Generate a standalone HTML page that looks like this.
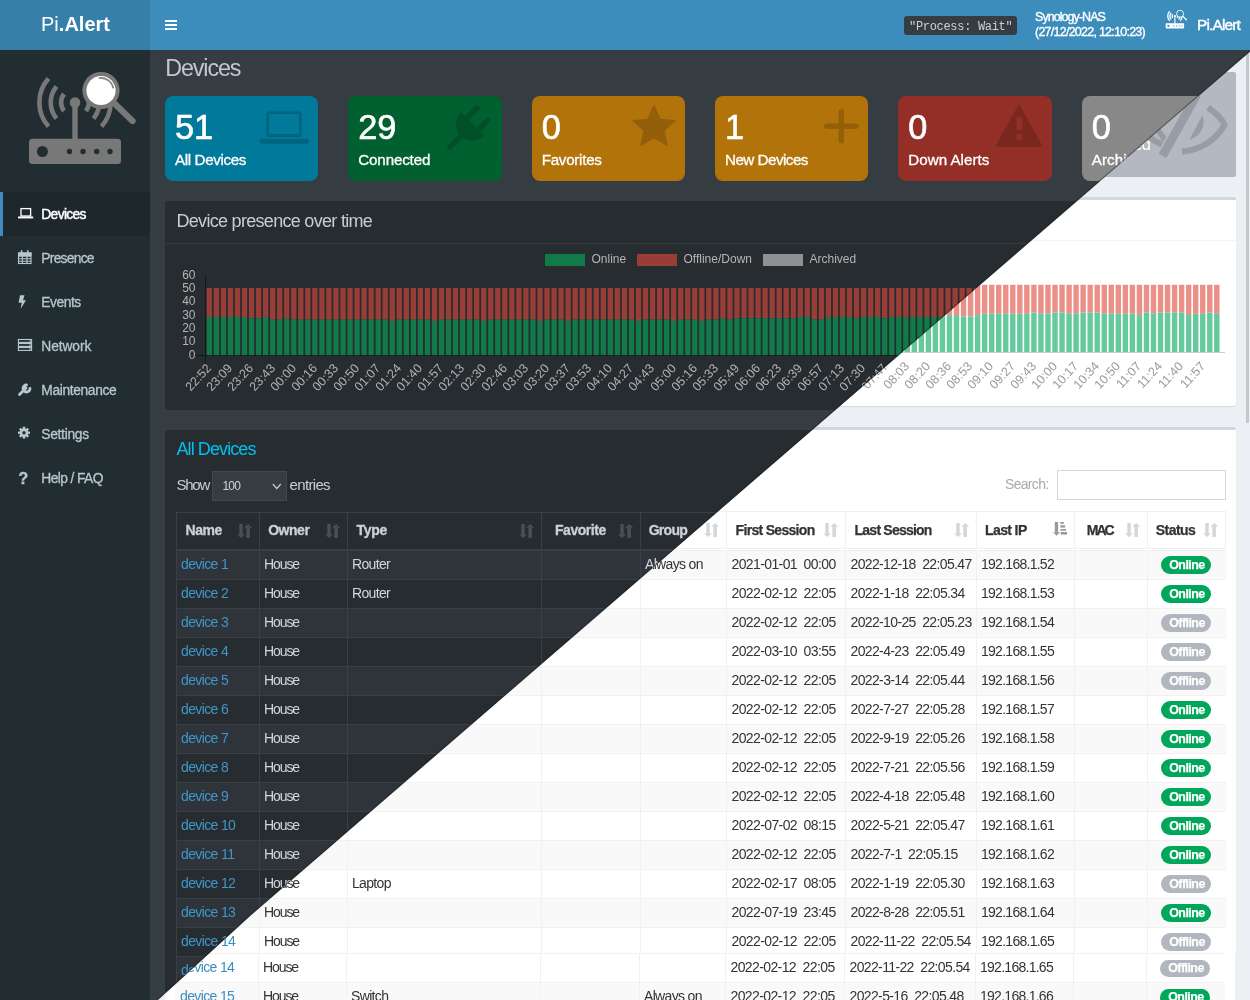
<!DOCTYPE html><html><head><meta charset="utf-8"><title>Pi.Alert Devices</title><style>
*{box-sizing:border-box;margin:0;padding:0}
html,body{width:1250px;height:1000px;overflow:hidden}
body{position:relative;font-family:"Liberation Sans",sans-serif;background:#353c42}
.layer{position:absolute;left:0;top:0;width:1250px;height:1000px;overflow:hidden;will-change:transform}
.t{position:absolute;white-space:pre}
.r{position:absolute}
svg{position:absolute;overflow:visible}
</style></head><body><div class="layer" id="dark"><div class="r" style="left:150.0px;top:50.0px;width:1100.0px;height:950.0px;background:#353c42;"></div><div class="r" style="left:0.0px;top:50.0px;width:150.0px;height:950.0px;background:#222d32;"></div><svg style="left:0;top:0" width="150" height="180" viewBox="0 0 150 180"><g fill="#787878">
<rect x="29" y="138.8" width="92" height="25.2" rx="3.5"/>
<rect x="72.3" y="102" width="5.4" height="38"/>
<circle cx="75" cy="102.6" r="5.3"/>
</g>
<g fill="#222d32"><circle cx="42.4" cy="151.5" r="5.5"/><circle cx="69.5" cy="151.5" r="2.7"/><circle cx="83" cy="151.5" r="2.7"/><circle cx="96.7" cy="151.5" r="2.7"/><circle cx="110" cy="151.5" r="2.7"/></g>
<g fill="none" stroke="#787878" stroke-width="4.6">
<path d="M48.5 78.5 A36 36 0 0 0 48.5 126.5"/>
<path d="M56.5 86.5 A25 25 0 0 0 56.5 118.5"/>
<path d="M64 94 A14 14 0 0 0 64 111"/>
<path d="M101.5 78.5 A36 36 0 0 1 101.5 126.5"/>
<path d="M93.5 86.5 A25 25 0 0 1 93.5 118.5"/>
<path d="M86 94 A14 14 0 0 1 86 111"/>
</g>
<line x1="115" y1="104" x2="132.5" y2="121" stroke="#787878" stroke-width="6.2" stroke-linecap="round"/>
<circle cx="101" cy="90.5" r="18.6" fill="#787878"/>
<circle cx="101" cy="90.5" r="14.6" fill="#fff"/>
<path d="M98.8 78.2 A12.5 12.5 0 0 1 113.3 88.3" fill="none" stroke="#8a8a8a" stroke-width="1.8"/>
</svg><div class="r" style="left:0.0px;top:192.0px;width:150.0px;height:44.0px;background:#1e282c;"></div><div class="r" style="left:0.0px;top:192.0px;width:3.0px;height:44.0px;background:#3c8dbc;"></div><div class="t" style="left:41.3px;top:207.5px;font-size:13.8px;line-height:13.8px;color:#ffffff;letter-spacing:-0.65px;-webkit-text-stroke:0.45px #fff;">Devices</div><div class="t" style="left:41.3px;top:251.5px;font-size:13.8px;line-height:13.8px;color:#b8c7ce;letter-spacing:-0.72px;-webkit-text-stroke:0.3px #b8c7ce;">Presence</div><div class="t" style="left:41.3px;top:295.5px;font-size:13.8px;line-height:13.8px;color:#b8c7ce;letter-spacing:-0.45px;-webkit-text-stroke:0.3px #b8c7ce;">Events</div><div class="t" style="left:41.3px;top:339.5px;font-size:13.8px;line-height:13.8px;color:#b8c7ce;letter-spacing:-0.09px;-webkit-text-stroke:0.3px #b8c7ce;">Network</div><div class="t" style="left:41.3px;top:383.5px;font-size:13.8px;line-height:13.8px;color:#b8c7ce;letter-spacing:-0.36px;-webkit-text-stroke:0.3px #b8c7ce;">Maintenance</div><div class="t" style="left:41.3px;top:427.5px;font-size:13.8px;line-height:13.8px;color:#b8c7ce;letter-spacing:-0.30px;-webkit-text-stroke:0.3px #b8c7ce;">Settings</div><div class="t" style="left:41.3px;top:471.5px;font-size:13.8px;line-height:13.8px;color:#b8c7ce;letter-spacing:-0.60px;-webkit-text-stroke:0.3px #b8c7ce;">Help / FAQ</div><svg style="left:0;top:180" width="40" height="320" viewBox="0 180 40 320">
<g fill="none" stroke="#fff" stroke-width="1.3"><rect x="21" y="208.6" width="9.6" height="7.4"/></g>
<rect x="18" y="216.5" width="15.2" height="1.9" fill="#fff"/>
<g fill="none" stroke="#b8c7ce" stroke-width="1.1"><rect x="18.5" y="253" width="12.5" height="10.5"/><path d="M18.5 256.3 H31 M18.5 258.8 H31 M18.5 261.2 H31 M22.4 256 V263.5 M27 256 V263.5"/></g>
<g fill="#b8c7ce"><rect x="18" y="252.5" width="13.5" height="3.5"/><rect x="20.8" y="250" width="1.6" height="3.5" rx="0.8"/><rect x="27" y="250" width="1.6" height="3.5" rx="0.8"/></g>
<path d="M20 295.3 L24.5 295.3 L23 300.3 L26 300.3 L20.5 309 L21.8 302.8 L18.6 302.8 Z" fill="#b8c7ce"/>
<g fill="none" stroke="#b8c7ce" stroke-width="1.1"><rect x="18.4" y="339.5" width="13.2" height="2.9"/><rect x="18.4" y="343.5" width="13.2" height="2.9"/><rect x="18.4" y="347.5" width="13.2" height="2.9"/></g><g fill="#b8c7ce"><circle cx="30" cy="341" r="0.8"/><circle cx="30" cy="345" r="0.8"/><circle cx="30" cy="349" r="0.8"/></g>
<path d="M19.5 394.5 L26 388 M26.5 385 a3.5 3.5 0 1 0 3.5 3.5" stroke="#b8c7ce" stroke-width="2.8" fill="none" stroke-linecap="round"/>
<circle cx="24" cy="432.7" r="4.4" fill="#b8c7ce"/>
<g stroke="#b8c7ce" stroke-width="2.3"><line x1="24" y1="426.7" x2="24" y2="438.7"/><line x1="18" y1="432.7" x2="30" y2="432.7"/><line x1="19.8" y1="428.5" x2="28.2" y2="436.9"/><line x1="28.2" y1="428.5" x2="19.8" y2="436.9"/></g>
<circle cx="24" cy="432.7" r="1.7" fill="#222d32"/>
</svg><div class="t" style="left:18.3px;top:470.0px;font-size:16.5px;line-height:16.5px;color:#b8c7ce;font-weight:bold;-webkit-text-stroke:0.3px #b8c7ce;">?</div><div class="t" style="left:165.3px;top:57.1px;font-size:23.3px;line-height:23.3px;color:#c2c7d0;letter-spacing:-1.12px;">Devices</div><div class="r" style="left:165.0px;top:96.0px;width:153.3px;height:85.0px;background:#00799a;border-radius:8px;"></div><div class="t" style="left:175.0px;top:110.0px;font-size:34.3px;line-height:34.3px;color:#ffffff;letter-spacing:-0.07px;-webkit-text-stroke:0.6px #fff;">51</div><div class="t" style="left:175.0px;top:151.9px;font-size:15.2px;line-height:15.2px;color:#ffffff;letter-spacing:-0.38px;-webkit-text-stroke:0.3px #fff;">All Devices</div><div class="r" style="left:348.3px;top:96.0px;width:153.3px;height:85.0px;background:#00602f;border-radius:8px;"></div><div class="t" style="left:358.3px;top:110.0px;font-size:34.3px;line-height:34.3px;color:#ffffff;letter-spacing:-0.07px;-webkit-text-stroke:0.6px #fff;">29</div><div class="t" style="left:358.3px;top:151.9px;font-size:15.2px;line-height:15.2px;color:#ffffff;letter-spacing:-0.17px;-webkit-text-stroke:0.3px #fff;">Connected</div><div class="r" style="left:531.7px;top:96.0px;width:153.3px;height:85.0px;background:#b3730b;border-radius:8px;"></div><div class="t" style="left:541.7px;top:110.0px;font-size:34.3px;line-height:34.3px;color:#ffffff;-webkit-text-stroke:0.6px #fff;">0</div><div class="t" style="left:541.7px;top:151.9px;font-size:15.2px;line-height:15.2px;color:#ffffff;letter-spacing:-0.28px;-webkit-text-stroke:0.3px #fff;">Favorites</div><div class="r" style="left:715.0px;top:96.0px;width:153.3px;height:85.0px;background:#b3730b;border-radius:8px;"></div><div class="t" style="left:725.0px;top:110.0px;font-size:34.3px;line-height:34.3px;color:#ffffff;-webkit-text-stroke:0.6px #fff;">1</div><div class="t" style="left:725.0px;top:151.9px;font-size:15.2px;line-height:15.2px;color:#ffffff;letter-spacing:-0.52px;-webkit-text-stroke:0.3px #fff;">New Devices</div><div class="r" style="left:898.3px;top:96.0px;width:153.3px;height:85.0px;background:#932f26;border-radius:8px;"></div><div class="t" style="left:908.3px;top:110.0px;font-size:34.3px;line-height:34.3px;color:#ffffff;-webkit-text-stroke:0.6px #fff;">0</div><div class="t" style="left:908.3px;top:151.9px;font-size:15.2px;line-height:15.2px;color:#ffffff;letter-spacing:-0.01px;-webkit-text-stroke:0.3px #fff;">Down Alerts</div><div class="r" style="left:1081.7px;top:96.0px;width:153.3px;height:85.0px;background:#888888;border-radius:8px;"></div><div class="t" style="left:1091.7px;top:110.0px;font-size:34.3px;line-height:34.3px;color:#ffffff;-webkit-text-stroke:0.6px #fff;">0</div><div class="t" style="left:1091.7px;top:151.9px;font-size:15.2px;line-height:15.2px;color:#ffffff;letter-spacing:0.11px;-webkit-text-stroke:0.3px #fff;">Archived</div><svg style="left:0;top:0" width="1250" height="200">
<g fill="#000" opacity="0.17">
<path fill-rule="evenodd" d="M269.7 111.2 h28.6 a3.5 3.5 0 0 1 3.5 3.5 v19 a3.5 3.5 0 0 1 -3.5 3.5 h-28.6 a3.5 3.5 0 0 1 -3.5 -3.5 v-19 a3.5 3.5 0 0 1 3.5 -3.5 z M269 114 v20 h30 v-20 z"/>
<path d="M259.5 138.9 h49.3 v2.8 a2 2 0 0 1 -2 2 h-45.3 a2 2 0 0 1 -2 -2 z"/>
</g>
<g fill="#000" opacity="0.17" transform="translate(473,124) rotate(45)">
<path d="M-16.5 0 A16.5 17.5 0 0 0 16.5 0 Z"/>
<rect x="-11.2" y="-16.5" width="5.5" height="18" rx="2.75"/>
<rect x="5.2" y="-16.5" width="5.5" height="18" rx="2.75"/>
<rect x="-2.75" y="10" width="5.5" height="25"/>
</g>
<g fill="#000" opacity="0.17"><polygon stroke="#000" stroke-width="1.5" stroke-linejoin="round" points="654,106 660.2,119.5 675,120.8 663.8,130.5 667,145 654,137.5 641,145 644.2,130.5 633,120.8 647.8,119.5"/></g>
<g fill="#000" opacity="0.17"><path d="M838.5 111.7 a2.75 2.75 0 0 1 5.5 0 v11.8 h11.8 a2.75 2.75 0 0 1 0 5.5 h-11.8 v11.8 a2.75 2.75 0 0 1 -5.5 0 v-11.8 h-11.8 a2.75 2.75 0 0 1 0 -5.5 h11.8 z"/></g>
<g opacity="0.17"><path fill="#000" d="M1019 104 L1042 145 a2 2 0 0 1 -2 2 h-42 a2 2 0 0 1 -2 -2 z"/></g>
<g fill="#932f26"><rect x="1016.6" y="117.5" width="5.6" height="13" rx="0.8"/><rect x="1016.6" y="134" width="5.6" height="6.5" rx="0.8"/></g>
</svg><div class="r" style="left:165.0px;top:201.0px;width:1070.0px;height:209.0px;background:#272c30;border-radius:3px;"></div><div class="r" style="left:165.0px;top:242.5px;width:1070.0px;height:1.0px;background:#353b41;"></div><div class="t" style="left:176.5px;top:211.8px;font-size:18.0px;line-height:18.0px;color:#c8cdd3;letter-spacing:-0.70px;">Device presence over time</div><div class="r" style="left:545.0px;top:254.0px;width:40.0px;height:12.0px;background:#107a48;"></div><div class="t" style="left:591.5px;top:252.8px;font-size:12.0px;line-height:12.0px;color:#b4b4b4;">Online</div><div class="r" style="left:637.0px;top:254.0px;width:40.0px;height:12.0px;background:#983e36;"></div><div class="t" style="left:683.5px;top:252.8px;font-size:12.0px;line-height:12.0px;color:#b4b4b4;">Offline/Down</div><div class="r" style="left:763.0px;top:254.0px;width:40.0px;height:12.0px;background:#8f9091;"></div><div class="t" style="left:809.5px;top:252.8px;font-size:12.0px;line-height:12.0px;color:#b4b4b4;">Archived</div><div class="r" style="left:205.0px;top:276.0px;width:1.0px;height:88.0px;background:#14171a;"></div><div class="r" style="left:195.0px;top:355.0px;width:1030.0px;height:1.0px;background:#14171a;"></div><div class="t" style="left:150px;width:45.5px;text-align:right;top:268.7px;font-size:12px;line-height:12px;color:#b4b4b4">60</div><div class="t" style="left:150px;width:45.5px;text-align:right;top:282.0px;font-size:12px;line-height:12px;color:#b4b4b4">50</div><div class="t" style="left:150px;width:45.5px;text-align:right;top:295.3px;font-size:12px;line-height:12px;color:#b4b4b4">40</div><div class="t" style="left:150px;width:45.5px;text-align:right;top:308.6px;font-size:12px;line-height:12px;color:#b4b4b4">30</div><div class="t" style="left:150px;width:45.5px;text-align:right;top:321.9px;font-size:12px;line-height:12px;color:#b4b4b4">20</div><div class="t" style="left:150px;width:45.5px;text-align:right;top:335.2px;font-size:12px;line-height:12px;color:#b4b4b4">10</div><div class="t" style="left:150px;width:45.5px;text-align:right;top:348.5px;font-size:12px;line-height:12px;color:#b4b4b4">0</div><svg style="left:0;top:0" width="1250" height="420"><g fill="#983e36"><rect x="206.70" y="287.98" width="5.3" height="29.00"/><rect x="213.73" y="287.98" width="5.3" height="29.00"/><rect x="220.77" y="287.98" width="5.3" height="29.00"/><rect x="227.80" y="287.98" width="5.3" height="29.00"/><rect x="234.84" y="287.98" width="5.3" height="29.00"/><rect x="241.88" y="287.98" width="5.3" height="29.00"/><rect x="248.91" y="287.98" width="5.3" height="30.31"/><rect x="255.94" y="287.98" width="5.3" height="30.31"/><rect x="262.98" y="287.98" width="5.3" height="29.00"/><rect x="270.01" y="287.98" width="5.3" height="31.63"/><rect x="277.05" y="287.98" width="5.3" height="31.63"/><rect x="284.08" y="287.98" width="5.3" height="30.31"/><rect x="291.12" y="287.98" width="5.3" height="31.63"/><rect x="298.15" y="287.98" width="5.3" height="31.63"/><rect x="305.19" y="287.98" width="5.3" height="31.63"/><rect x="312.23" y="287.98" width="5.3" height="31.63"/><rect x="319.26" y="287.98" width="5.3" height="31.63"/><rect x="326.29" y="287.98" width="5.3" height="31.63"/><rect x="333.33" y="287.98" width="5.3" height="31.63"/><rect x="340.37" y="287.98" width="5.3" height="31.63"/><rect x="347.40" y="287.98" width="5.3" height="31.63"/><rect x="354.44" y="287.98" width="5.3" height="31.63"/><rect x="361.47" y="287.98" width="5.3" height="31.63"/><rect x="368.50" y="287.98" width="5.3" height="31.63"/><rect x="375.54" y="287.98" width="5.3" height="31.63"/><rect x="382.57" y="287.98" width="5.3" height="31.63"/><rect x="389.61" y="287.98" width="5.3" height="32.95"/><rect x="396.64" y="287.98" width="5.3" height="31.63"/><rect x="403.68" y="287.98" width="5.3" height="31.63"/><rect x="410.72" y="287.98" width="5.3" height="31.63"/><rect x="417.75" y="287.98" width="5.3" height="31.63"/><rect x="424.78" y="287.98" width="5.3" height="31.63"/><rect x="431.82" y="287.98" width="5.3" height="32.95"/><rect x="438.86" y="287.98" width="5.3" height="31.63"/><rect x="445.89" y="287.98" width="5.3" height="31.63"/><rect x="452.92" y="287.98" width="5.3" height="31.63"/><rect x="459.96" y="287.98" width="5.3" height="31.63"/><rect x="467.00" y="287.98" width="5.3" height="31.63"/><rect x="474.03" y="287.98" width="5.3" height="31.63"/><rect x="481.06" y="287.98" width="5.3" height="32.95"/><rect x="488.10" y="287.98" width="5.3" height="31.63"/><rect x="495.13" y="287.98" width="5.3" height="31.63"/><rect x="502.17" y="287.98" width="5.3" height="31.63"/><rect x="509.20" y="287.98" width="5.3" height="31.63"/><rect x="516.24" y="287.98" width="5.3" height="31.63"/><rect x="523.27" y="287.98" width="5.3" height="31.63"/><rect x="530.31" y="287.98" width="5.3" height="31.63"/><rect x="537.35" y="287.98" width="5.3" height="32.95"/><rect x="544.38" y="287.98" width="5.3" height="31.63"/><rect x="551.41" y="287.98" width="5.3" height="31.63"/><rect x="558.45" y="287.98" width="5.3" height="31.63"/><rect x="565.49" y="287.98" width="5.3" height="32.95"/><rect x="572.52" y="287.98" width="5.3" height="31.63"/><rect x="579.56" y="287.98" width="5.3" height="31.63"/><rect x="586.59" y="287.98" width="5.3" height="31.63"/><rect x="593.62" y="287.98" width="5.3" height="31.63"/><rect x="600.66" y="287.98" width="5.3" height="31.63"/><rect x="607.69" y="287.98" width="5.3" height="31.63"/><rect x="614.73" y="287.98" width="5.3" height="31.63"/><rect x="621.76" y="287.98" width="5.3" height="31.63"/><rect x="628.80" y="287.98" width="5.3" height="31.63"/><rect x="635.84" y="287.98" width="5.3" height="32.95"/><rect x="642.87" y="287.98" width="5.3" height="31.63"/><rect x="649.90" y="287.98" width="5.3" height="31.63"/><rect x="656.94" y="287.98" width="5.3" height="31.63"/><rect x="663.98" y="287.98" width="5.3" height="31.63"/><rect x="671.01" y="287.98" width="5.3" height="32.95"/><rect x="678.05" y="287.98" width="5.3" height="31.63"/><rect x="685.08" y="287.98" width="5.3" height="31.63"/><rect x="692.12" y="287.98" width="5.3" height="31.63"/><rect x="699.15" y="287.98" width="5.3" height="32.95"/><rect x="706.18" y="287.98" width="5.3" height="31.63"/><rect x="713.22" y="287.98" width="5.3" height="31.63"/><rect x="720.26" y="287.98" width="5.3" height="30.31"/><rect x="727.29" y="287.98" width="5.3" height="31.63"/><rect x="734.33" y="287.98" width="5.3" height="30.31"/><rect x="741.36" y="287.98" width="5.3" height="30.31"/><rect x="748.39" y="287.98" width="5.3" height="30.31"/><rect x="755.43" y="287.98" width="5.3" height="30.31"/><rect x="762.46" y="287.98" width="5.3" height="30.31"/><rect x="769.50" y="287.98" width="5.3" height="30.31"/><rect x="776.54" y="287.98" width="5.3" height="30.31"/><rect x="783.57" y="287.98" width="5.3" height="30.31"/><rect x="790.61" y="287.98" width="5.3" height="30.31"/><rect x="797.64" y="287.98" width="5.3" height="29.00"/><rect x="804.67" y="287.98" width="5.3" height="29.00"/><rect x="811.71" y="287.98" width="5.3" height="31.63"/><rect x="818.74" y="287.98" width="5.3" height="31.63"/><rect x="825.78" y="287.98" width="5.3" height="29.00"/><rect x="832.82" y="287.98" width="5.3" height="29.00"/><rect x="839.85" y="287.98" width="5.3" height="29.00"/><rect x="846.88" y="287.98" width="5.3" height="29.00"/><rect x="853.92" y="287.98" width="5.3" height="30.31"/><rect x="860.95" y="287.98" width="5.3" height="29.00"/><rect x="867.99" y="287.98" width="5.3" height="29.00"/><rect x="875.03" y="287.98" width="5.3" height="29.00"/><rect x="882.06" y="287.98" width="5.3" height="30.31"/><rect x="889.10" y="287.98" width="5.3" height="29.00"/><rect x="896.13" y="287.98" width="5.3" height="29.00"/><rect x="903.16" y="287.98" width="5.3" height="29.00"/><rect x="910.20" y="287.98" width="5.3" height="29.00"/><rect x="917.23" y="287.98" width="5.3" height="29.00"/><rect x="924.27" y="287.98" width="5.3" height="29.00"/><rect x="931.31" y="287.98" width="5.3" height="29.00"/><rect x="938.34" y="287.98" width="5.3" height="29.00"/><rect x="945.38" y="287.98" width="5.3" height="29.00"/><rect x="952.41" y="287.98" width="5.3" height="29.00"/><rect x="959.44" y="287.98" width="5.3" height="31.63"/><rect x="966.48" y="287.98" width="5.3" height="31.63"/><rect x="973.52" y="287.98" width="5.3" height="30.31"/><rect x="980.55" y="287.98" width="5.3" height="29.00"/><rect x="987.59" y="287.98" width="5.3" height="29.00"/><rect x="994.62" y="287.98" width="5.3" height="29.00"/><rect x="1001.65" y="287.98" width="5.3" height="29.00"/><rect x="1008.69" y="287.98" width="5.3" height="29.00"/><rect x="1015.72" y="287.98" width="5.3" height="29.00"/><rect x="1022.76" y="287.98" width="5.3" height="29.00"/><rect x="1029.80" y="287.98" width="5.3" height="27.68"/><rect x="1036.83" y="287.98" width="5.3" height="29.00"/><rect x="1043.87" y="287.98" width="5.3" height="29.00"/><rect x="1050.90" y="287.98" width="5.3" height="27.68"/><rect x="1057.93" y="287.98" width="5.3" height="27.68"/><rect x="1064.97" y="287.98" width="5.3" height="29.00"/><rect x="1072.01" y="287.98" width="5.3" height="29.00"/><rect x="1079.04" y="287.98" width="5.3" height="27.68"/><rect x="1086.08" y="287.98" width="5.3" height="27.68"/><rect x="1093.11" y="287.98" width="5.3" height="27.68"/><rect x="1100.14" y="287.98" width="5.3" height="29.00"/><rect x="1107.18" y="287.98" width="5.3" height="29.00"/><rect x="1114.21" y="287.98" width="5.3" height="29.00"/><rect x="1121.25" y="287.98" width="5.3" height="29.00"/><rect x="1128.29" y="287.98" width="5.3" height="29.00"/><rect x="1135.32" y="287.98" width="5.3" height="30.31"/><rect x="1142.36" y="287.98" width="5.3" height="27.68"/><rect x="1149.39" y="287.98" width="5.3" height="29.00"/><rect x="1156.42" y="287.98" width="5.3" height="27.68"/><rect x="1163.46" y="287.98" width="5.3" height="27.68"/><rect x="1170.50" y="287.98" width="5.3" height="27.68"/><rect x="1177.53" y="287.98" width="5.3" height="27.68"/><rect x="1184.57" y="287.98" width="5.3" height="30.31"/><rect x="1191.60" y="287.98" width="5.3" height="29.00"/><rect x="1198.63" y="287.98" width="5.3" height="29.00"/><rect x="1205.67" y="287.98" width="5.3" height="27.68"/><rect x="1212.70" y="287.98" width="5.3" height="29.00"/></g><g fill="#107a48"><rect x="206.70" y="316.98" width="5.3" height="38.22"/><rect x="213.73" y="316.98" width="5.3" height="38.22"/><rect x="220.77" y="316.98" width="5.3" height="38.22"/><rect x="227.80" y="316.98" width="5.3" height="38.22"/><rect x="234.84" y="316.98" width="5.3" height="38.22"/><rect x="241.88" y="316.98" width="5.3" height="38.22"/><rect x="248.91" y="318.30" width="5.3" height="36.90"/><rect x="255.94" y="318.30" width="5.3" height="36.90"/><rect x="262.98" y="316.98" width="5.3" height="38.22"/><rect x="270.01" y="319.61" width="5.3" height="35.59"/><rect x="277.05" y="319.61" width="5.3" height="35.59"/><rect x="284.08" y="318.30" width="5.3" height="36.90"/><rect x="291.12" y="319.61" width="5.3" height="35.59"/><rect x="298.15" y="319.61" width="5.3" height="35.59"/><rect x="305.19" y="319.61" width="5.3" height="35.59"/><rect x="312.23" y="319.61" width="5.3" height="35.59"/><rect x="319.26" y="319.61" width="5.3" height="35.59"/><rect x="326.29" y="319.61" width="5.3" height="35.59"/><rect x="333.33" y="319.61" width="5.3" height="35.59"/><rect x="340.37" y="319.61" width="5.3" height="35.59"/><rect x="347.40" y="319.61" width="5.3" height="35.59"/><rect x="354.44" y="319.61" width="5.3" height="35.59"/><rect x="361.47" y="319.61" width="5.3" height="35.59"/><rect x="368.50" y="319.61" width="5.3" height="35.59"/><rect x="375.54" y="319.61" width="5.3" height="35.59"/><rect x="382.57" y="319.61" width="5.3" height="35.59"/><rect x="389.61" y="320.93" width="5.3" height="34.27"/><rect x="396.64" y="319.61" width="5.3" height="35.59"/><rect x="403.68" y="319.61" width="5.3" height="35.59"/><rect x="410.72" y="319.61" width="5.3" height="35.59"/><rect x="417.75" y="319.61" width="5.3" height="35.59"/><rect x="424.78" y="319.61" width="5.3" height="35.59"/><rect x="431.82" y="320.93" width="5.3" height="34.27"/><rect x="438.86" y="319.61" width="5.3" height="35.59"/><rect x="445.89" y="319.61" width="5.3" height="35.59"/><rect x="452.92" y="319.61" width="5.3" height="35.59"/><rect x="459.96" y="319.61" width="5.3" height="35.59"/><rect x="467.00" y="319.61" width="5.3" height="35.59"/><rect x="474.03" y="319.61" width="5.3" height="35.59"/><rect x="481.06" y="320.93" width="5.3" height="34.27"/><rect x="488.10" y="319.61" width="5.3" height="35.59"/><rect x="495.13" y="319.61" width="5.3" height="35.59"/><rect x="502.17" y="319.61" width="5.3" height="35.59"/><rect x="509.20" y="319.61" width="5.3" height="35.59"/><rect x="516.24" y="319.61" width="5.3" height="35.59"/><rect x="523.27" y="319.61" width="5.3" height="35.59"/><rect x="530.31" y="319.61" width="5.3" height="35.59"/><rect x="537.35" y="320.93" width="5.3" height="34.27"/><rect x="544.38" y="319.61" width="5.3" height="35.59"/><rect x="551.41" y="319.61" width="5.3" height="35.59"/><rect x="558.45" y="319.61" width="5.3" height="35.59"/><rect x="565.49" y="320.93" width="5.3" height="34.27"/><rect x="572.52" y="319.61" width="5.3" height="35.59"/><rect x="579.56" y="319.61" width="5.3" height="35.59"/><rect x="586.59" y="319.61" width="5.3" height="35.59"/><rect x="593.62" y="319.61" width="5.3" height="35.59"/><rect x="600.66" y="319.61" width="5.3" height="35.59"/><rect x="607.69" y="319.61" width="5.3" height="35.59"/><rect x="614.73" y="319.61" width="5.3" height="35.59"/><rect x="621.76" y="319.61" width="5.3" height="35.59"/><rect x="628.80" y="319.61" width="5.3" height="35.59"/><rect x="635.84" y="320.93" width="5.3" height="34.27"/><rect x="642.87" y="319.61" width="5.3" height="35.59"/><rect x="649.90" y="319.61" width="5.3" height="35.59"/><rect x="656.94" y="319.61" width="5.3" height="35.59"/><rect x="663.98" y="319.61" width="5.3" height="35.59"/><rect x="671.01" y="320.93" width="5.3" height="34.27"/><rect x="678.05" y="319.61" width="5.3" height="35.59"/><rect x="685.08" y="319.61" width="5.3" height="35.59"/><rect x="692.12" y="319.61" width="5.3" height="35.59"/><rect x="699.15" y="320.93" width="5.3" height="34.27"/><rect x="706.18" y="319.61" width="5.3" height="35.59"/><rect x="713.22" y="319.61" width="5.3" height="35.59"/><rect x="720.26" y="318.30" width="5.3" height="36.90"/><rect x="727.29" y="319.61" width="5.3" height="35.59"/><rect x="734.33" y="318.30" width="5.3" height="36.90"/><rect x="741.36" y="318.30" width="5.3" height="36.90"/><rect x="748.39" y="318.30" width="5.3" height="36.90"/><rect x="755.43" y="318.30" width="5.3" height="36.90"/><rect x="762.46" y="318.30" width="5.3" height="36.90"/><rect x="769.50" y="318.30" width="5.3" height="36.90"/><rect x="776.54" y="318.30" width="5.3" height="36.90"/><rect x="783.57" y="318.30" width="5.3" height="36.90"/><rect x="790.61" y="318.30" width="5.3" height="36.90"/><rect x="797.64" y="316.98" width="5.3" height="38.22"/><rect x="804.67" y="316.98" width="5.3" height="38.22"/><rect x="811.71" y="319.61" width="5.3" height="35.59"/><rect x="818.74" y="319.61" width="5.3" height="35.59"/><rect x="825.78" y="316.98" width="5.3" height="38.22"/><rect x="832.82" y="316.98" width="5.3" height="38.22"/><rect x="839.85" y="316.98" width="5.3" height="38.22"/><rect x="846.88" y="316.98" width="5.3" height="38.22"/><rect x="853.92" y="318.30" width="5.3" height="36.90"/><rect x="860.95" y="316.98" width="5.3" height="38.22"/><rect x="867.99" y="316.98" width="5.3" height="38.22"/><rect x="875.03" y="316.98" width="5.3" height="38.22"/><rect x="882.06" y="318.30" width="5.3" height="36.90"/><rect x="889.10" y="316.98" width="5.3" height="38.22"/><rect x="896.13" y="316.98" width="5.3" height="38.22"/><rect x="903.16" y="316.98" width="5.3" height="38.22"/><rect x="910.20" y="316.98" width="5.3" height="38.22"/><rect x="917.23" y="316.98" width="5.3" height="38.22"/><rect x="924.27" y="316.98" width="5.3" height="38.22"/><rect x="931.31" y="316.98" width="5.3" height="38.22"/><rect x="938.34" y="316.98" width="5.3" height="38.22"/><rect x="945.38" y="316.98" width="5.3" height="38.22"/><rect x="952.41" y="316.98" width="5.3" height="38.22"/><rect x="959.44" y="319.61" width="5.3" height="35.59"/><rect x="966.48" y="319.61" width="5.3" height="35.59"/><rect x="973.52" y="318.30" width="5.3" height="36.90"/><rect x="980.55" y="316.98" width="5.3" height="38.22"/><rect x="987.59" y="316.98" width="5.3" height="38.22"/><rect x="994.62" y="316.98" width="5.3" height="38.22"/><rect x="1001.65" y="316.98" width="5.3" height="38.22"/><rect x="1008.69" y="316.98" width="5.3" height="38.22"/><rect x="1015.72" y="316.98" width="5.3" height="38.22"/><rect x="1022.76" y="316.98" width="5.3" height="38.22"/><rect x="1029.80" y="315.66" width="5.3" height="39.54"/><rect x="1036.83" y="316.98" width="5.3" height="38.22"/><rect x="1043.87" y="316.98" width="5.3" height="38.22"/><rect x="1050.90" y="315.66" width="5.3" height="39.54"/><rect x="1057.93" y="315.66" width="5.3" height="39.54"/><rect x="1064.97" y="316.98" width="5.3" height="38.22"/><rect x="1072.01" y="316.98" width="5.3" height="38.22"/><rect x="1079.04" y="315.66" width="5.3" height="39.54"/><rect x="1086.08" y="315.66" width="5.3" height="39.54"/><rect x="1093.11" y="315.66" width="5.3" height="39.54"/><rect x="1100.14" y="316.98" width="5.3" height="38.22"/><rect x="1107.18" y="316.98" width="5.3" height="38.22"/><rect x="1114.21" y="316.98" width="5.3" height="38.22"/><rect x="1121.25" y="316.98" width="5.3" height="38.22"/><rect x="1128.29" y="316.98" width="5.3" height="38.22"/><rect x="1135.32" y="318.30" width="5.3" height="36.90"/><rect x="1142.36" y="315.66" width="5.3" height="39.54"/><rect x="1149.39" y="316.98" width="5.3" height="38.22"/><rect x="1156.42" y="315.66" width="5.3" height="39.54"/><rect x="1163.46" y="315.66" width="5.3" height="39.54"/><rect x="1170.50" y="315.66" width="5.3" height="39.54"/><rect x="1177.53" y="315.66" width="5.3" height="39.54"/><rect x="1184.57" y="318.30" width="5.3" height="36.90"/><rect x="1191.60" y="316.98" width="5.3" height="38.22"/><rect x="1198.63" y="316.98" width="5.3" height="38.22"/><rect x="1205.67" y="315.66" width="5.3" height="39.54"/><rect x="1212.70" y="316.98" width="5.3" height="38.22"/></g></svg><div class="t" style="left:169.2px;top:360.3px;width:40px;text-align:right;font-size:12.5px;line-height:12px;color:#b4b4b4;transform-origin:100% 50%;transform:rotate(-47.5deg)">22:52</div><div class="t" style="left:190.3px;top:360.3px;width:40px;text-align:right;font-size:12.5px;line-height:12px;color:#b4b4b4;transform-origin:100% 50%;transform:rotate(-47.5deg)">23:09</div><div class="t" style="left:211.4px;top:360.3px;width:40px;text-align:right;font-size:12.5px;line-height:12px;color:#b4b4b4;transform-origin:100% 50%;transform:rotate(-47.5deg)">23:26</div><div class="t" style="left:232.5px;top:360.3px;width:40px;text-align:right;font-size:12.5px;line-height:12px;color:#b4b4b4;transform-origin:100% 50%;transform:rotate(-47.5deg)">23:43</div><div class="t" style="left:253.6px;top:360.3px;width:40px;text-align:right;font-size:12.5px;line-height:12px;color:#b4b4b4;transform-origin:100% 50%;transform:rotate(-47.5deg)">00:00</div><div class="t" style="left:274.7px;top:360.3px;width:40px;text-align:right;font-size:12.5px;line-height:12px;color:#b4b4b4;transform-origin:100% 50%;transform:rotate(-47.5deg)">00:16</div><div class="t" style="left:295.8px;top:360.3px;width:40px;text-align:right;font-size:12.5px;line-height:12px;color:#b4b4b4;transform-origin:100% 50%;transform:rotate(-47.5deg)">00:33</div><div class="t" style="left:316.9px;top:360.3px;width:40px;text-align:right;font-size:12.5px;line-height:12px;color:#b4b4b4;transform-origin:100% 50%;transform:rotate(-47.5deg)">00:50</div><div class="t" style="left:338.0px;top:360.3px;width:40px;text-align:right;font-size:12.5px;line-height:12px;color:#b4b4b4;transform-origin:100% 50%;transform:rotate(-47.5deg)">01:07</div><div class="t" style="left:359.1px;top:360.3px;width:40px;text-align:right;font-size:12.5px;line-height:12px;color:#b4b4b4;transform-origin:100% 50%;transform:rotate(-47.5deg)">01:24</div><div class="t" style="left:380.2px;top:360.3px;width:40px;text-align:right;font-size:12.5px;line-height:12px;color:#b4b4b4;transform-origin:100% 50%;transform:rotate(-47.5deg)">01:40</div><div class="t" style="left:401.3px;top:360.3px;width:40px;text-align:right;font-size:12.5px;line-height:12px;color:#b4b4b4;transform-origin:100% 50%;transform:rotate(-47.5deg)">01:57</div><div class="t" style="left:422.4px;top:360.3px;width:40px;text-align:right;font-size:12.5px;line-height:12px;color:#b4b4b4;transform-origin:100% 50%;transform:rotate(-47.5deg)">02:13</div><div class="t" style="left:443.5px;top:360.3px;width:40px;text-align:right;font-size:12.5px;line-height:12px;color:#b4b4b4;transform-origin:100% 50%;transform:rotate(-47.5deg)">02:30</div><div class="t" style="left:464.6px;top:360.3px;width:40px;text-align:right;font-size:12.5px;line-height:12px;color:#b4b4b4;transform-origin:100% 50%;transform:rotate(-47.5deg)">02:46</div><div class="t" style="left:485.7px;top:360.3px;width:40px;text-align:right;font-size:12.5px;line-height:12px;color:#b4b4b4;transform-origin:100% 50%;transform:rotate(-47.5deg)">03:03</div><div class="t" style="left:506.8px;top:360.3px;width:40px;text-align:right;font-size:12.5px;line-height:12px;color:#b4b4b4;transform-origin:100% 50%;transform:rotate(-47.5deg)">03:20</div><div class="t" style="left:527.9px;top:360.3px;width:40px;text-align:right;font-size:12.5px;line-height:12px;color:#b4b4b4;transform-origin:100% 50%;transform:rotate(-47.5deg)">03:37</div><div class="t" style="left:549.0px;top:360.3px;width:40px;text-align:right;font-size:12.5px;line-height:12px;color:#b4b4b4;transform-origin:100% 50%;transform:rotate(-47.5deg)">03:53</div><div class="t" style="left:570.1px;top:360.3px;width:40px;text-align:right;font-size:12.5px;line-height:12px;color:#b4b4b4;transform-origin:100% 50%;transform:rotate(-47.5deg)">04:10</div><div class="t" style="left:591.2px;top:360.3px;width:40px;text-align:right;font-size:12.5px;line-height:12px;color:#b4b4b4;transform-origin:100% 50%;transform:rotate(-47.5deg)">04:27</div><div class="t" style="left:612.4px;top:360.3px;width:40px;text-align:right;font-size:12.5px;line-height:12px;color:#b4b4b4;transform-origin:100% 50%;transform:rotate(-47.5deg)">04:43</div><div class="t" style="left:633.5px;top:360.3px;width:40px;text-align:right;font-size:12.5px;line-height:12px;color:#b4b4b4;transform-origin:100% 50%;transform:rotate(-47.5deg)">05:00</div><div class="t" style="left:654.6px;top:360.3px;width:40px;text-align:right;font-size:12.5px;line-height:12px;color:#b4b4b4;transform-origin:100% 50%;transform:rotate(-47.5deg)">05:16</div><div class="t" style="left:675.7px;top:360.3px;width:40px;text-align:right;font-size:12.5px;line-height:12px;color:#b4b4b4;transform-origin:100% 50%;transform:rotate(-47.5deg)">05:33</div><div class="t" style="left:696.8px;top:360.3px;width:40px;text-align:right;font-size:12.5px;line-height:12px;color:#b4b4b4;transform-origin:100% 50%;transform:rotate(-47.5deg)">05:49</div><div class="t" style="left:717.9px;top:360.3px;width:40px;text-align:right;font-size:12.5px;line-height:12px;color:#b4b4b4;transform-origin:100% 50%;transform:rotate(-47.5deg)">06:06</div><div class="t" style="left:739.0px;top:360.3px;width:40px;text-align:right;font-size:12.5px;line-height:12px;color:#b4b4b4;transform-origin:100% 50%;transform:rotate(-47.5deg)">06:23</div><div class="t" style="left:760.1px;top:360.3px;width:40px;text-align:right;font-size:12.5px;line-height:12px;color:#b4b4b4;transform-origin:100% 50%;transform:rotate(-47.5deg)">06:39</div><div class="t" style="left:781.2px;top:360.3px;width:40px;text-align:right;font-size:12.5px;line-height:12px;color:#b4b4b4;transform-origin:100% 50%;transform:rotate(-47.5deg)">06:57</div><div class="t" style="left:802.3px;top:360.3px;width:40px;text-align:right;font-size:12.5px;line-height:12px;color:#b4b4b4;transform-origin:100% 50%;transform:rotate(-47.5deg)">07:13</div><div class="t" style="left:823.4px;top:360.3px;width:40px;text-align:right;font-size:12.5px;line-height:12px;color:#b4b4b4;transform-origin:100% 50%;transform:rotate(-47.5deg)">07:30</div><div class="t" style="left:844.5px;top:360.3px;width:40px;text-align:right;font-size:12.5px;line-height:12px;color:#b4b4b4;transform-origin:100% 50%;transform:rotate(-47.5deg)">07:47</div><div class="t" style="left:865.6px;top:360.3px;width:40px;text-align:right;font-size:12.5px;line-height:12px;color:#b4b4b4;transform-origin:100% 50%;transform:rotate(-47.5deg)">08:03</div><div class="t" style="left:886.7px;top:360.3px;width:40px;text-align:right;font-size:12.5px;line-height:12px;color:#b4b4b4;transform-origin:100% 50%;transform:rotate(-47.5deg)">08:20</div><div class="t" style="left:907.8px;top:360.3px;width:40px;text-align:right;font-size:12.5px;line-height:12px;color:#b4b4b4;transform-origin:100% 50%;transform:rotate(-47.5deg)">08:36</div><div class="t" style="left:928.9px;top:360.3px;width:40px;text-align:right;font-size:12.5px;line-height:12px;color:#b4b4b4;transform-origin:100% 50%;transform:rotate(-47.5deg)">08:53</div><div class="t" style="left:950.0px;top:360.3px;width:40px;text-align:right;font-size:12.5px;line-height:12px;color:#b4b4b4;transform-origin:100% 50%;transform:rotate(-47.5deg)">09:10</div><div class="t" style="left:971.1px;top:360.3px;width:40px;text-align:right;font-size:12.5px;line-height:12px;color:#b4b4b4;transform-origin:100% 50%;transform:rotate(-47.5deg)">09:27</div><div class="t" style="left:992.2px;top:360.3px;width:40px;text-align:right;font-size:12.5px;line-height:12px;color:#b4b4b4;transform-origin:100% 50%;transform:rotate(-47.5deg)">09:43</div><div class="t" style="left:1013.4px;top:360.3px;width:40px;text-align:right;font-size:12.5px;line-height:12px;color:#b4b4b4;transform-origin:100% 50%;transform:rotate(-47.5deg)">10:00</div><div class="t" style="left:1034.5px;top:360.3px;width:40px;text-align:right;font-size:12.5px;line-height:12px;color:#b4b4b4;transform-origin:100% 50%;transform:rotate(-47.5deg)">10:17</div><div class="t" style="left:1055.6px;top:360.3px;width:40px;text-align:right;font-size:12.5px;line-height:12px;color:#b4b4b4;transform-origin:100% 50%;transform:rotate(-47.5deg)">10:34</div><div class="t" style="left:1076.7px;top:360.3px;width:40px;text-align:right;font-size:12.5px;line-height:12px;color:#b4b4b4;transform-origin:100% 50%;transform:rotate(-47.5deg)">10:50</div><div class="t" style="left:1097.8px;top:360.3px;width:40px;text-align:right;font-size:12.5px;line-height:12px;color:#b4b4b4;transform-origin:100% 50%;transform:rotate(-47.5deg)">11:07</div><div class="t" style="left:1118.9px;top:360.3px;width:40px;text-align:right;font-size:12.5px;line-height:12px;color:#b4b4b4;transform-origin:100% 50%;transform:rotate(-47.5deg)">11:24</div><div class="t" style="left:1140.0px;top:360.3px;width:40px;text-align:right;font-size:12.5px;line-height:12px;color:#b4b4b4;transform-origin:100% 50%;transform:rotate(-47.5deg)">11:40</div><div class="t" style="left:1161.1px;top:360.3px;width:40px;text-align:right;font-size:12.5px;line-height:12px;color:#b4b4b4;transform-origin:100% 50%;transform:rotate(-47.5deg)">11:57</div><div class="r" style="left:165.0px;top:429.5px;width:1070.0px;height:600.0px;background:#272c30;border-radius:3px;"></div><div class="t" style="left:176.5px;top:440.3px;font-size:18.0px;line-height:18.0px;color:#00c0ef;letter-spacing:-0.91px;">All Devices</div><div class="t" style="left:176.5px;top:477.3px;font-size:15.0px;line-height:15.0px;color:#c8cdd3;letter-spacing:-1.26px;">Show</div><div class="r" style="left:212.0px;top:471.0px;width:75.0px;height:30.0px;background:#353c42;border:1px solid #40474e;"></div><div class="t" style="left:222.5px;top:480.3px;font-size:12.0px;line-height:12.0px;color:#d0d4da;letter-spacing:-0.84px;">100</div><svg style="left:270px;top:480px" width="14" height="10"><path d="M2.8 4 L6.8 8.5 L10.8 4" stroke="#c8cdd3" stroke-width="1.2" fill="none"/></svg><div class="t" style="left:289.5px;top:477.3px;font-size:15.0px;line-height:15.0px;color:#c8cdd3;letter-spacing:-0.65px;">entries</div><div class="r" style="left:176.0px;top:512.0px;width:1049.5px;height:37.5px;background:#272c30;border:1px solid #3a4046;"></div><div class="t" style="left:185.6px;top:523.1px;font-size:14.0px;line-height:14.0px;color:#cdd1d7;font-weight:bold;letter-spacing:-0.48px;-webkit-text-stroke:0.3px #cdd1d7;">Name</div><div class="t" style="left:268.2px;top:523.1px;font-size:14.0px;line-height:14.0px;color:#cdd1d7;font-weight:bold;letter-spacing:-0.47px;-webkit-text-stroke:0.3px #cdd1d7;">Owner</div><div class="t" style="left:356.5px;top:523.1px;font-size:14.0px;line-height:14.0px;color:#cdd1d7;font-weight:bold;letter-spacing:-0.26px;-webkit-text-stroke:0.3px #cdd1d7;">Type</div><div class="t" style="left:555.0px;top:523.1px;font-size:14.0px;line-height:14.0px;color:#cdd1d7;font-weight:bold;letter-spacing:-0.47px;-webkit-text-stroke:0.3px #cdd1d7;">Favorite</div><div class="t" style="left:648.7px;top:523.1px;font-size:14.0px;line-height:14.0px;color:#cdd1d7;font-weight:bold;letter-spacing:-0.72px;-webkit-text-stroke:0.3px #cdd1d7;">Group</div><div class="t" style="left:735.6px;top:523.1px;font-size:14.0px;line-height:14.0px;color:#cdd1d7;font-weight:bold;letter-spacing:-0.69px;-webkit-text-stroke:0.3px #cdd1d7;">First Session</div><div class="t" style="left:854.6px;top:523.1px;font-size:14.0px;line-height:14.0px;color:#cdd1d7;font-weight:bold;letter-spacing:-0.78px;-webkit-text-stroke:0.3px #cdd1d7;">Last Session</div><div class="t" style="left:985.1px;top:523.1px;font-size:14.0px;line-height:14.0px;color:#cdd1d7;font-weight:bold;letter-spacing:-0.63px;-webkit-text-stroke:0.3px #cdd1d7;">Last IP</div><div class="t" style="left:1086.7px;top:523.1px;font-size:14.0px;line-height:14.0px;color:#cdd1d7;font-weight:bold;letter-spacing:-1.96px;-webkit-text-stroke:0.3px #cdd1d7;">MAC</div><div class="t" style="left:1155.7px;top:523.1px;font-size:14.0px;line-height:14.0px;color:#cdd1d7;font-weight:bold;letter-spacing:-0.53px;-webkit-text-stroke:0.3px #cdd1d7;">Status</div><svg style="left:236.6px;top:524.0px" width="16" height="15" viewBox="0 0 16 15"><g fill="#4a4f54"><rect x="2.3" y="0" width="3.4" height="11"/><path d="M0 10.5 L8 10.5 L4 14 Z"/><rect x="9.4" y="3.5" width="3.5" height="10.5"/><path d="M7.2 3.7 L15.2 3.7 L11.2 0 Z"/></g></svg><svg style="left:324.6px;top:524.0px" width="16" height="15" viewBox="0 0 16 15"><g fill="#4a4f54"><rect x="2.3" y="0" width="3.4" height="11"/><path d="M0 10.5 L8 10.5 L4 14 Z"/><rect x="9.4" y="3.5" width="3.5" height="10.5"/><path d="M7.2 3.7 L15.2 3.7 L11.2 0 Z"/></g></svg><svg style="left:518.6px;top:524.0px" width="16" height="15" viewBox="0 0 16 15"><g fill="#4a4f54"><rect x="2.3" y="0" width="3.4" height="11"/><path d="M0 10.5 L8 10.5 L4 14 Z"/><rect x="9.4" y="3.5" width="3.5" height="10.5"/><path d="M7.2 3.7 L15.2 3.7 L11.2 0 Z"/></g></svg><svg style="left:617.6px;top:524.0px" width="16" height="15" viewBox="0 0 16 15"><g fill="#4a4f54"><rect x="2.3" y="0" width="3.4" height="11"/><path d="M0 10.5 L8 10.5 L4 14 Z"/><rect x="9.4" y="3.5" width="3.5" height="10.5"/><path d="M7.2 3.7 L15.2 3.7 L11.2 0 Z"/></g></svg><svg style="left:703.6px;top:524.0px" width="16" height="15" viewBox="0 0 16 15"><g fill="#4a4f54"><rect x="2.3" y="0" width="3.4" height="11"/><path d="M0 10.5 L8 10.5 L4 14 Z"/><rect x="9.4" y="3.5" width="3.5" height="10.5"/><path d="M7.2 3.7 L15.2 3.7 L11.2 0 Z"/></g></svg><svg style="left:822.6px;top:524.0px" width="16" height="15" viewBox="0 0 16 15"><g fill="#4a4f54"><rect x="2.3" y="0" width="3.4" height="11"/><path d="M0 10.5 L8 10.5 L4 14 Z"/><rect x="9.4" y="3.5" width="3.5" height="10.5"/><path d="M7.2 3.7 L15.2 3.7 L11.2 0 Z"/></g></svg><svg style="left:953.6px;top:524.0px" width="16" height="15" viewBox="0 0 16 15"><g fill="#4a4f54"><rect x="2.3" y="0" width="3.4" height="11"/><path d="M0 10.5 L8 10.5 L4 14 Z"/><rect x="9.4" y="3.5" width="3.5" height="10.5"/><path d="M7.2 3.7 L15.2 3.7 L11.2 0 Z"/></g></svg><svg style="left:1051.6px;top:524.0px" width="16" height="15" viewBox="0 0 16 15"><g fill="#4a4f54"><rect x="2.3" y="0" width="3.4" height="11"/><path d="M0 10.5 L8 10.5 L4 14 Z"/><rect x="9.4" y="3.5" width="3.5" height="10.5"/><path d="M7.2 3.7 L15.2 3.7 L11.2 0 Z"/></g></svg><svg style="left:1124.6px;top:524.0px" width="16" height="15" viewBox="0 0 16 15"><g fill="#4a4f54"><rect x="2.3" y="0" width="3.4" height="11"/><path d="M0 10.5 L8 10.5 L4 14 Z"/><rect x="9.4" y="3.5" width="3.5" height="10.5"/><path d="M7.2 3.7 L15.2 3.7 L11.2 0 Z"/></g></svg><svg style="left:1202.6px;top:524.0px" width="16" height="15" viewBox="0 0 16 15"><g fill="#4a4f54"><rect x="2.3" y="0" width="3.4" height="11"/><path d="M0 10.5 L8 10.5 L4 14 Z"/><rect x="9.4" y="3.5" width="3.5" height="10.5"/><path d="M7.2 3.7 L15.2 3.7 L11.2 0 Z"/></g></svg><div class="r" style="left:176.0px;top:549.5px;width:1049.5px;height:29.0px;background:#2e343a;"></div><div class="r" style="left:176.0px;top:549.5px;width:1049.5px;height:1.0px;background:#3a4046;"></div><div class="t" style="left:181.0px;top:557.1px;font-size:14.0px;line-height:14.0px;color:#3f96c9;letter-spacing:-0.62px;">device 1</div><div class="t" style="left:264.0px;top:557.1px;font-size:14.0px;line-height:14.0px;color:#d2d6dc;letter-spacing:-1.09px;">House</div><div class="t" style="left:352.0px;top:557.1px;font-size:14.0px;line-height:14.0px;color:#d2d6dc;letter-spacing:-0.67px;">Router</div><div class="t" style="left:645.0px;top:557.1px;font-size:14.0px;line-height:14.0px;color:#d2d6dc;letter-spacing:-0.67px;">Always on</div><div class="r" style="left:176.0px;top:578.5px;width:1049.5px;height:1.0px;background:#3a4046;"></div><div class="t" style="left:181.0px;top:586.1px;font-size:14.0px;line-height:14.0px;color:#3f96c9;letter-spacing:-0.62px;">device 2</div><div class="t" style="left:264.0px;top:586.1px;font-size:14.0px;line-height:14.0px;color:#d2d6dc;letter-spacing:-1.09px;">House</div><div class="t" style="left:352.0px;top:586.1px;font-size:14.0px;line-height:14.0px;color:#d2d6dc;letter-spacing:-0.67px;">Router</div><div class="r" style="left:176.0px;top:607.5px;width:1049.5px;height:29.0px;background:#2e343a;"></div><div class="r" style="left:176.0px;top:607.5px;width:1049.5px;height:1.0px;background:#3a4046;"></div><div class="t" style="left:181.0px;top:615.1px;font-size:14.0px;line-height:14.0px;color:#3f96c9;letter-spacing:-0.62px;">device 3</div><div class="t" style="left:264.0px;top:615.1px;font-size:14.0px;line-height:14.0px;color:#d2d6dc;letter-spacing:-1.09px;">House</div><div class="r" style="left:176.0px;top:636.5px;width:1049.5px;height:1.0px;background:#3a4046;"></div><div class="t" style="left:181.0px;top:644.1px;font-size:14.0px;line-height:14.0px;color:#3f96c9;letter-spacing:-0.62px;">device 4</div><div class="t" style="left:264.0px;top:644.1px;font-size:14.0px;line-height:14.0px;color:#d2d6dc;letter-spacing:-1.09px;">House</div><div class="r" style="left:176.0px;top:665.5px;width:1049.5px;height:29.0px;background:#2e343a;"></div><div class="r" style="left:176.0px;top:665.5px;width:1049.5px;height:1.0px;background:#3a4046;"></div><div class="t" style="left:181.0px;top:673.1px;font-size:14.0px;line-height:14.0px;color:#3f96c9;letter-spacing:-0.62px;">device 5</div><div class="t" style="left:264.0px;top:673.1px;font-size:14.0px;line-height:14.0px;color:#d2d6dc;letter-spacing:-1.09px;">House</div><div class="r" style="left:176.0px;top:694.5px;width:1049.5px;height:1.0px;background:#3a4046;"></div><div class="t" style="left:181.0px;top:702.1px;font-size:14.0px;line-height:14.0px;color:#3f96c9;letter-spacing:-0.62px;">device 6</div><div class="t" style="left:264.0px;top:702.1px;font-size:14.0px;line-height:14.0px;color:#d2d6dc;letter-spacing:-1.09px;">House</div><div class="r" style="left:176.0px;top:723.5px;width:1049.5px;height:29.0px;background:#2e343a;"></div><div class="r" style="left:176.0px;top:723.5px;width:1049.5px;height:1.0px;background:#3a4046;"></div><div class="t" style="left:181.0px;top:731.1px;font-size:14.0px;line-height:14.0px;color:#3f96c9;letter-spacing:-0.62px;">device 7</div><div class="t" style="left:264.0px;top:731.1px;font-size:14.0px;line-height:14.0px;color:#d2d6dc;letter-spacing:-1.09px;">House</div><div class="r" style="left:176.0px;top:752.5px;width:1049.5px;height:1.0px;background:#3a4046;"></div><div class="t" style="left:181.0px;top:760.1px;font-size:14.0px;line-height:14.0px;color:#3f96c9;letter-spacing:-0.62px;">device 8</div><div class="t" style="left:264.0px;top:760.1px;font-size:14.0px;line-height:14.0px;color:#d2d6dc;letter-spacing:-1.09px;">House</div><div class="r" style="left:176.0px;top:781.5px;width:1049.5px;height:29.0px;background:#2e343a;"></div><div class="r" style="left:176.0px;top:781.5px;width:1049.5px;height:1.0px;background:#3a4046;"></div><div class="t" style="left:181.0px;top:789.1px;font-size:14.0px;line-height:14.0px;color:#3f96c9;letter-spacing:-0.62px;">device 9</div><div class="t" style="left:264.0px;top:789.1px;font-size:14.0px;line-height:14.0px;color:#d2d6dc;letter-spacing:-1.09px;">House</div><div class="r" style="left:176.0px;top:810.5px;width:1049.5px;height:1.0px;background:#3a4046;"></div><div class="t" style="left:181.0px;top:818.1px;font-size:14.0px;line-height:14.0px;color:#3f96c9;letter-spacing:-0.63px;">device 10</div><div class="t" style="left:264.0px;top:818.1px;font-size:14.0px;line-height:14.0px;color:#d2d6dc;letter-spacing:-1.09px;">House</div><div class="r" style="left:176.0px;top:839.5px;width:1049.5px;height:29.0px;background:#2e343a;"></div><div class="r" style="left:176.0px;top:839.5px;width:1049.5px;height:1.0px;background:#3a4046;"></div><div class="t" style="left:181.0px;top:847.1px;font-size:14.0px;line-height:14.0px;color:#3f96c9;letter-spacing:-0.62px;">device 11</div><div class="t" style="left:264.0px;top:847.1px;font-size:14.0px;line-height:14.0px;color:#d2d6dc;letter-spacing:-1.09px;">House</div><div class="r" style="left:176.0px;top:868.5px;width:1049.5px;height:1.0px;background:#3a4046;"></div><div class="t" style="left:181.0px;top:876.1px;font-size:14.0px;line-height:14.0px;color:#3f96c9;letter-spacing:-0.63px;">device 12</div><div class="t" style="left:264.0px;top:876.1px;font-size:14.0px;line-height:14.0px;color:#d2d6dc;letter-spacing:-1.09px;">House</div><div class="t" style="left:352.0px;top:876.1px;font-size:14.0px;line-height:14.0px;color:#d2d6dc;letter-spacing:-0.68px;">Laptop</div><div class="r" style="left:176.0px;top:897.5px;width:1049.5px;height:29.0px;background:#2e343a;"></div><div class="r" style="left:176.0px;top:897.5px;width:1049.5px;height:1.0px;background:#3a4046;"></div><div class="t" style="left:181.0px;top:905.1px;font-size:14.0px;line-height:14.0px;color:#3f96c9;letter-spacing:-0.63px;">device 13</div><div class="t" style="left:264.0px;top:905.1px;font-size:14.0px;line-height:14.0px;color:#d2d6dc;letter-spacing:-1.09px;">House</div><div class="r" style="left:176.0px;top:926.5px;width:1049.5px;height:1.0px;background:#3a4046;"></div><div class="t" style="left:181.0px;top:934.1px;font-size:14.0px;line-height:14.0px;color:#3f96c9;letter-spacing:-0.63px;">device 14</div><div class="t" style="left:264.0px;top:934.1px;font-size:14.0px;line-height:14.0px;color:#d2d6dc;letter-spacing:-1.09px;">House</div><div class="r" style="left:176.0px;top:955.5px;width:1049.5px;height:29.0px;background:#2e343a;"></div><div class="r" style="left:176.0px;top:955.5px;width:1049.5px;height:1.0px;background:#3a4046;"></div><div class="t" style="left:181.0px;top:963.1px;font-size:14.0px;line-height:14.0px;color:#3f96c9;letter-spacing:-0.63px;">device 14</div><div class="t" style="left:264.0px;top:963.1px;font-size:14.0px;line-height:14.0px;color:#d2d6dc;letter-spacing:-1.09px;">House</div><div class="r" style="left:176.0px;top:984.5px;width:1049.5px;height:1.0px;background:#3a4046;"></div><div class="t" style="left:181.0px;top:992.1px;font-size:14.0px;line-height:14.0px;color:#3f96c9;letter-spacing:-0.63px;">device 15</div><div class="t" style="left:264.0px;top:992.1px;font-size:14.0px;line-height:14.0px;color:#d2d6dc;letter-spacing:-1.09px;">House</div><div class="t" style="left:352.0px;top:992.1px;font-size:14.0px;line-height:14.0px;color:#d2d6dc;letter-spacing:-0.65px;">Switch</div><div class="t" style="left:645.0px;top:992.1px;font-size:14.0px;line-height:14.0px;color:#d2d6dc;letter-spacing:-0.67px;">Always on</div><div class="r" style="left:176.0px;top:512.5px;width:1.0px;height:500.0px;background:#3a4046;"></div><div class="r" style="left:259.0px;top:512.5px;width:1.0px;height:500.0px;background:#3a4046;"></div><div class="r" style="left:347.0px;top:512.5px;width:1.0px;height:500.0px;background:#3a4046;"></div><div class="r" style="left:541.0px;top:512.5px;width:1.0px;height:500.0px;background:#3a4046;"></div><div class="r" style="left:640.0px;top:512.5px;width:1.0px;height:500.0px;background:#3a4046;"></div><div class="r" style="left:726.0px;top:512.5px;width:1.0px;height:500.0px;background:#3a4046;"></div><div class="r" style="left:845.0px;top:512.5px;width:1.0px;height:500.0px;background:#3a4046;"></div><div class="r" style="left:976.0px;top:512.5px;width:1.0px;height:500.0px;background:#3a4046;"></div><div class="r" style="left:1074.0px;top:512.5px;width:1.0px;height:500.0px;background:#3a4046;"></div><div class="r" style="left:1147.0px;top:512.5px;width:1.0px;height:500.0px;background:#3a4046;"></div><div class="r" style="left:1225.0px;top:512.5px;width:1.0px;height:500.0px;background:#3a4046;"></div></div><div class="layer" id="light" style="clip-path:polygon(1251.8px 50px,1260px 50px,1260px 1000px,157.8px 1000px,185.5px 975px,250px 916px)"><div class="r" style="left:150.0px;top:50.0px;width:1100.0px;height:950.0px;background:#ecf0f5;"></div><div class="r" style="left:0.0px;top:50.0px;width:150.0px;height:950.0px;background:#222d32;"></div><div class="r" style="left:1236.0px;top:50.0px;width:14.0px;height:950.0px;background:#ecf0f5;"></div><div class="r" style="left:1246.4px;top:50.0px;width:2.2px;height:373.0px;background:#c5c7ca;"></div><div class="r" style="left:1082.0px;top:72.0px;width:154.0px;height:104.5px;background:#b4b8c0;border-radius:2px;"></div><div class="t" style="left:1092.0px;top:136.0px;font-size:16.5px;line-height:16.5px;color:#ffffff;letter-spacing:-0.77px;">Archived</div><svg style="left:0;top:0" width="1250" height="200">
<g fill="none" stroke="#989ca4" stroke-width="6">
<path d="M1208 107.5 C1216 113 1222 119 1224.5 125 C1216 140 1200 150.5 1182 151.5"/>
<path d="M1149 137 C1153 140 1157 142.5 1162 144.5"/>
</g>
<polygon fill="#989ca4" points="1191.2,95.8 1201,95.8 1166.4,158 1158.8,153.8"/>
<path d="M1202.5 115 C1206 126 1201 136 1189.5 139.5 Z" fill="#989ca4"/>
<path d="M1160 128 L1166.5 137 L1163 142 L1155 131 Z" fill="#989ca4"/>
</svg><div class="r" style="left:165.0px;top:197.0px;width:1071.0px;height:209.0px;background:#ffffff;border-top:3px solid #d2d6de;border-radius:3px;box-shadow:0 1px 1px rgba(0,0,0,0.1);"></div><div class="r" style="left:165.0px;top:240.0px;width:1071.0px;height:1.0px;background:#f4f4f4;"></div><svg style="left:0;top:0" width="1250" height="420"><g fill="#ea9088"><rect x="208.10" y="284.78" width="5.4" height="29.00"/><rect x="215.13" y="284.78" width="5.4" height="29.00"/><rect x="222.17" y="284.78" width="5.4" height="29.00"/><rect x="229.20" y="284.78" width="5.4" height="29.00"/><rect x="236.24" y="284.78" width="5.4" height="29.00"/><rect x="243.27" y="284.78" width="5.4" height="29.00"/><rect x="250.31" y="284.78" width="5.4" height="30.31"/><rect x="257.35" y="284.78" width="5.4" height="30.31"/><rect x="264.38" y="284.78" width="5.4" height="29.00"/><rect x="271.41" y="284.78" width="5.4" height="31.63"/><rect x="278.45" y="284.78" width="5.4" height="31.63"/><rect x="285.49" y="284.78" width="5.4" height="30.31"/><rect x="292.52" y="284.78" width="5.4" height="31.63"/><rect x="299.56" y="284.78" width="5.4" height="31.63"/><rect x="306.59" y="284.78" width="5.4" height="31.63"/><rect x="313.62" y="284.78" width="5.4" height="31.63"/><rect x="320.66" y="284.78" width="5.4" height="31.63"/><rect x="327.69" y="284.78" width="5.4" height="31.63"/><rect x="334.73" y="284.78" width="5.4" height="31.63"/><rect x="341.76" y="284.78" width="5.4" height="31.63"/><rect x="348.80" y="284.78" width="5.4" height="31.63"/><rect x="355.84" y="284.78" width="5.4" height="31.63"/><rect x="362.87" y="284.78" width="5.4" height="31.63"/><rect x="369.90" y="284.78" width="5.4" height="31.63"/><rect x="376.94" y="284.78" width="5.4" height="31.63"/><rect x="383.98" y="284.78" width="5.4" height="31.63"/><rect x="391.01" y="284.78" width="5.4" height="32.95"/><rect x="398.04" y="284.78" width="5.4" height="31.63"/><rect x="405.08" y="284.78" width="5.4" height="31.63"/><rect x="412.12" y="284.78" width="5.4" height="31.63"/><rect x="419.15" y="284.78" width="5.4" height="31.63"/><rect x="426.19" y="284.78" width="5.4" height="31.63"/><rect x="433.22" y="284.78" width="5.4" height="32.95"/><rect x="440.25" y="284.78" width="5.4" height="31.63"/><rect x="447.29" y="284.78" width="5.4" height="31.63"/><rect x="454.32" y="284.78" width="5.4" height="31.63"/><rect x="461.36" y="284.78" width="5.4" height="31.63"/><rect x="468.39" y="284.78" width="5.4" height="31.63"/><rect x="475.43" y="284.78" width="5.4" height="31.63"/><rect x="482.47" y="284.78" width="5.4" height="32.95"/><rect x="489.50" y="284.78" width="5.4" height="31.63"/><rect x="496.53" y="284.78" width="5.4" height="31.63"/><rect x="503.57" y="284.78" width="5.4" height="31.63"/><rect x="510.61" y="284.78" width="5.4" height="31.63"/><rect x="517.64" y="284.78" width="5.4" height="31.63"/><rect x="524.67" y="284.78" width="5.4" height="31.63"/><rect x="531.71" y="284.78" width="5.4" height="31.63"/><rect x="538.75" y="284.78" width="5.4" height="32.95"/><rect x="545.78" y="284.78" width="5.4" height="31.63"/><rect x="552.82" y="284.78" width="5.4" height="31.63"/><rect x="559.85" y="284.78" width="5.4" height="31.63"/><rect x="566.88" y="284.78" width="5.4" height="32.95"/><rect x="573.92" y="284.78" width="5.4" height="31.63"/><rect x="580.96" y="284.78" width="5.4" height="31.63"/><rect x="587.99" y="284.78" width="5.4" height="31.63"/><rect x="595.02" y="284.78" width="5.4" height="31.63"/><rect x="602.06" y="284.78" width="5.4" height="31.63"/><rect x="609.10" y="284.78" width="5.4" height="31.63"/><rect x="616.13" y="284.78" width="5.4" height="31.63"/><rect x="623.16" y="284.78" width="5.4" height="31.63"/><rect x="630.20" y="284.78" width="5.4" height="31.63"/><rect x="637.24" y="284.78" width="5.4" height="32.95"/><rect x="644.27" y="284.78" width="5.4" height="31.63"/><rect x="651.30" y="284.78" width="5.4" height="31.63"/><rect x="658.34" y="284.78" width="5.4" height="31.63"/><rect x="665.38" y="284.78" width="5.4" height="31.63"/><rect x="672.41" y="284.78" width="5.4" height="32.95"/><rect x="679.45" y="284.78" width="5.4" height="31.63"/><rect x="686.48" y="284.78" width="5.4" height="31.63"/><rect x="693.51" y="284.78" width="5.4" height="31.63"/><rect x="700.55" y="284.78" width="5.4" height="32.95"/><rect x="707.59" y="284.78" width="5.4" height="31.63"/><rect x="714.62" y="284.78" width="5.4" height="31.63"/><rect x="721.66" y="284.78" width="5.4" height="30.31"/><rect x="728.69" y="284.78" width="5.4" height="31.63"/><rect x="735.73" y="284.78" width="5.4" height="30.31"/><rect x="742.76" y="284.78" width="5.4" height="30.31"/><rect x="749.80" y="284.78" width="5.4" height="30.31"/><rect x="756.83" y="284.78" width="5.4" height="30.31"/><rect x="763.87" y="284.78" width="5.4" height="30.31"/><rect x="770.90" y="284.78" width="5.4" height="30.31"/><rect x="777.94" y="284.78" width="5.4" height="30.31"/><rect x="784.97" y="284.78" width="5.4" height="30.31"/><rect x="792.00" y="284.78" width="5.4" height="30.31"/><rect x="799.04" y="284.78" width="5.4" height="29.00"/><rect x="806.08" y="284.78" width="5.4" height="29.00"/><rect x="813.11" y="284.78" width="5.4" height="31.63"/><rect x="820.14" y="284.78" width="5.4" height="31.63"/><rect x="827.18" y="284.78" width="5.4" height="29.00"/><rect x="834.22" y="284.78" width="5.4" height="29.00"/><rect x="841.25" y="284.78" width="5.4" height="29.00"/><rect x="848.29" y="284.78" width="5.4" height="29.00"/><rect x="855.32" y="284.78" width="5.4" height="30.31"/><rect x="862.36" y="284.78" width="5.4" height="29.00"/><rect x="869.39" y="284.78" width="5.4" height="29.00"/><rect x="876.43" y="284.78" width="5.4" height="29.00"/><rect x="883.46" y="284.78" width="5.4" height="30.31"/><rect x="890.50" y="284.78" width="5.4" height="29.00"/><rect x="897.53" y="284.78" width="5.4" height="29.00"/><rect x="904.57" y="284.78" width="5.4" height="29.00"/><rect x="911.60" y="284.78" width="5.4" height="29.00"/><rect x="918.63" y="284.78" width="5.4" height="29.00"/><rect x="925.67" y="284.78" width="5.4" height="29.00"/><rect x="932.71" y="284.78" width="5.4" height="29.00"/><rect x="939.74" y="284.78" width="5.4" height="29.00"/><rect x="946.78" y="284.78" width="5.4" height="30.31"/><rect x="953.81" y="284.78" width="5.4" height="30.31"/><rect x="960.85" y="284.78" width="5.4" height="31.63"/><rect x="967.88" y="284.78" width="5.4" height="31.63"/><rect x="974.92" y="284.78" width="5.4" height="30.31"/><rect x="981.95" y="284.78" width="5.4" height="29.00"/><rect x="988.99" y="284.78" width="5.4" height="29.00"/><rect x="996.02" y="284.78" width="5.4" height="29.00"/><rect x="1003.06" y="284.78" width="5.4" height="29.00"/><rect x="1010.09" y="284.78" width="5.4" height="29.00"/><rect x="1017.12" y="284.78" width="5.4" height="29.00"/><rect x="1024.16" y="284.78" width="5.4" height="29.00"/><rect x="1031.19" y="284.78" width="5.4" height="27.68"/><rect x="1038.23" y="284.78" width="5.4" height="29.00"/><rect x="1045.26" y="284.78" width="5.4" height="29.00"/><rect x="1052.30" y="284.78" width="5.4" height="27.68"/><rect x="1059.34" y="284.78" width="5.4" height="27.68"/><rect x="1066.37" y="284.78" width="5.4" height="29.00"/><rect x="1073.40" y="284.78" width="5.4" height="29.00"/><rect x="1080.44" y="284.78" width="5.4" height="27.68"/><rect x="1087.47" y="284.78" width="5.4" height="27.68"/><rect x="1094.51" y="284.78" width="5.4" height="27.68"/><rect x="1101.55" y="284.78" width="5.4" height="29.00"/><rect x="1108.58" y="284.78" width="5.4" height="29.00"/><rect x="1115.62" y="284.78" width="5.4" height="29.00"/><rect x="1122.65" y="284.78" width="5.4" height="29.00"/><rect x="1129.68" y="284.78" width="5.4" height="29.00"/><rect x="1136.72" y="284.78" width="5.4" height="30.31"/><rect x="1143.75" y="284.78" width="5.4" height="27.68"/><rect x="1150.79" y="284.78" width="5.4" height="29.00"/><rect x="1157.83" y="284.78" width="5.4" height="27.68"/><rect x="1164.86" y="284.78" width="5.4" height="27.68"/><rect x="1171.89" y="284.78" width="5.4" height="27.68"/><rect x="1178.93" y="284.78" width="5.4" height="27.68"/><rect x="1185.96" y="284.78" width="5.4" height="30.31"/><rect x="1193.00" y="284.78" width="5.4" height="29.00"/><rect x="1200.04" y="284.78" width="5.4" height="29.00"/><rect x="1207.07" y="284.78" width="5.4" height="27.68"/><rect x="1214.11" y="284.78" width="5.4" height="29.00"/></g><g fill="#66c99b"><rect x="208.10" y="313.78" width="5.4" height="38.22"/><rect x="215.13" y="313.78" width="5.4" height="38.22"/><rect x="222.17" y="313.78" width="5.4" height="38.22"/><rect x="229.20" y="313.78" width="5.4" height="38.22"/><rect x="236.24" y="313.78" width="5.4" height="38.22"/><rect x="243.27" y="313.78" width="5.4" height="38.22"/><rect x="250.31" y="315.10" width="5.4" height="36.90"/><rect x="257.35" y="315.10" width="5.4" height="36.90"/><rect x="264.38" y="313.78" width="5.4" height="38.22"/><rect x="271.41" y="316.41" width="5.4" height="35.59"/><rect x="278.45" y="316.41" width="5.4" height="35.59"/><rect x="285.49" y="315.10" width="5.4" height="36.90"/><rect x="292.52" y="316.41" width="5.4" height="35.59"/><rect x="299.56" y="316.41" width="5.4" height="35.59"/><rect x="306.59" y="316.41" width="5.4" height="35.59"/><rect x="313.62" y="316.41" width="5.4" height="35.59"/><rect x="320.66" y="316.41" width="5.4" height="35.59"/><rect x="327.69" y="316.41" width="5.4" height="35.59"/><rect x="334.73" y="316.41" width="5.4" height="35.59"/><rect x="341.76" y="316.41" width="5.4" height="35.59"/><rect x="348.80" y="316.41" width="5.4" height="35.59"/><rect x="355.84" y="316.41" width="5.4" height="35.59"/><rect x="362.87" y="316.41" width="5.4" height="35.59"/><rect x="369.90" y="316.41" width="5.4" height="35.59"/><rect x="376.94" y="316.41" width="5.4" height="35.59"/><rect x="383.98" y="316.41" width="5.4" height="35.59"/><rect x="391.01" y="317.73" width="5.4" height="34.27"/><rect x="398.04" y="316.41" width="5.4" height="35.59"/><rect x="405.08" y="316.41" width="5.4" height="35.59"/><rect x="412.12" y="316.41" width="5.4" height="35.59"/><rect x="419.15" y="316.41" width="5.4" height="35.59"/><rect x="426.19" y="316.41" width="5.4" height="35.59"/><rect x="433.22" y="317.73" width="5.4" height="34.27"/><rect x="440.25" y="316.41" width="5.4" height="35.59"/><rect x="447.29" y="316.41" width="5.4" height="35.59"/><rect x="454.32" y="316.41" width="5.4" height="35.59"/><rect x="461.36" y="316.41" width="5.4" height="35.59"/><rect x="468.39" y="316.41" width="5.4" height="35.59"/><rect x="475.43" y="316.41" width="5.4" height="35.59"/><rect x="482.47" y="317.73" width="5.4" height="34.27"/><rect x="489.50" y="316.41" width="5.4" height="35.59"/><rect x="496.53" y="316.41" width="5.4" height="35.59"/><rect x="503.57" y="316.41" width="5.4" height="35.59"/><rect x="510.61" y="316.41" width="5.4" height="35.59"/><rect x="517.64" y="316.41" width="5.4" height="35.59"/><rect x="524.67" y="316.41" width="5.4" height="35.59"/><rect x="531.71" y="316.41" width="5.4" height="35.59"/><rect x="538.75" y="317.73" width="5.4" height="34.27"/><rect x="545.78" y="316.41" width="5.4" height="35.59"/><rect x="552.82" y="316.41" width="5.4" height="35.59"/><rect x="559.85" y="316.41" width="5.4" height="35.59"/><rect x="566.88" y="317.73" width="5.4" height="34.27"/><rect x="573.92" y="316.41" width="5.4" height="35.59"/><rect x="580.96" y="316.41" width="5.4" height="35.59"/><rect x="587.99" y="316.41" width="5.4" height="35.59"/><rect x="595.02" y="316.41" width="5.4" height="35.59"/><rect x="602.06" y="316.41" width="5.4" height="35.59"/><rect x="609.10" y="316.41" width="5.4" height="35.59"/><rect x="616.13" y="316.41" width="5.4" height="35.59"/><rect x="623.16" y="316.41" width="5.4" height="35.59"/><rect x="630.20" y="316.41" width="5.4" height="35.59"/><rect x="637.24" y="317.73" width="5.4" height="34.27"/><rect x="644.27" y="316.41" width="5.4" height="35.59"/><rect x="651.30" y="316.41" width="5.4" height="35.59"/><rect x="658.34" y="316.41" width="5.4" height="35.59"/><rect x="665.38" y="316.41" width="5.4" height="35.59"/><rect x="672.41" y="317.73" width="5.4" height="34.27"/><rect x="679.45" y="316.41" width="5.4" height="35.59"/><rect x="686.48" y="316.41" width="5.4" height="35.59"/><rect x="693.51" y="316.41" width="5.4" height="35.59"/><rect x="700.55" y="317.73" width="5.4" height="34.27"/><rect x="707.59" y="316.41" width="5.4" height="35.59"/><rect x="714.62" y="316.41" width="5.4" height="35.59"/><rect x="721.66" y="315.10" width="5.4" height="36.90"/><rect x="728.69" y="316.41" width="5.4" height="35.59"/><rect x="735.73" y="315.10" width="5.4" height="36.90"/><rect x="742.76" y="315.10" width="5.4" height="36.90"/><rect x="749.80" y="315.10" width="5.4" height="36.90"/><rect x="756.83" y="315.10" width="5.4" height="36.90"/><rect x="763.87" y="315.10" width="5.4" height="36.90"/><rect x="770.90" y="315.10" width="5.4" height="36.90"/><rect x="777.94" y="315.10" width="5.4" height="36.90"/><rect x="784.97" y="315.10" width="5.4" height="36.90"/><rect x="792.00" y="315.10" width="5.4" height="36.90"/><rect x="799.04" y="313.78" width="5.4" height="38.22"/><rect x="806.08" y="313.78" width="5.4" height="38.22"/><rect x="813.11" y="316.41" width="5.4" height="35.59"/><rect x="820.14" y="316.41" width="5.4" height="35.59"/><rect x="827.18" y="313.78" width="5.4" height="38.22"/><rect x="834.22" y="313.78" width="5.4" height="38.22"/><rect x="841.25" y="313.78" width="5.4" height="38.22"/><rect x="848.29" y="313.78" width="5.4" height="38.22"/><rect x="855.32" y="315.10" width="5.4" height="36.90"/><rect x="862.36" y="313.78" width="5.4" height="38.22"/><rect x="869.39" y="313.78" width="5.4" height="38.22"/><rect x="876.43" y="313.78" width="5.4" height="38.22"/><rect x="883.46" y="315.10" width="5.4" height="36.90"/><rect x="890.50" y="313.78" width="5.4" height="38.22"/><rect x="897.53" y="313.78" width="5.4" height="38.22"/><rect x="904.57" y="313.78" width="5.4" height="38.22"/><rect x="911.60" y="313.78" width="5.4" height="38.22"/><rect x="918.63" y="313.78" width="5.4" height="38.22"/><rect x="925.67" y="313.78" width="5.4" height="38.22"/><rect x="932.71" y="313.78" width="5.4" height="38.22"/><rect x="939.74" y="313.78" width="5.4" height="38.22"/><rect x="946.78" y="315.10" width="5.4" height="36.90"/><rect x="953.81" y="315.10" width="5.4" height="36.90"/><rect x="960.85" y="316.41" width="5.4" height="35.59"/><rect x="967.88" y="316.41" width="5.4" height="35.59"/><rect x="974.92" y="315.10" width="5.4" height="36.90"/><rect x="981.95" y="313.78" width="5.4" height="38.22"/><rect x="988.99" y="313.78" width="5.4" height="38.22"/><rect x="996.02" y="313.78" width="5.4" height="38.22"/><rect x="1003.06" y="313.78" width="5.4" height="38.22"/><rect x="1010.09" y="313.78" width="5.4" height="38.22"/><rect x="1017.12" y="313.78" width="5.4" height="38.22"/><rect x="1024.16" y="313.78" width="5.4" height="38.22"/><rect x="1031.19" y="312.46" width="5.4" height="39.54"/><rect x="1038.23" y="313.78" width="5.4" height="38.22"/><rect x="1045.26" y="313.78" width="5.4" height="38.22"/><rect x="1052.30" y="312.46" width="5.4" height="39.54"/><rect x="1059.34" y="312.46" width="5.4" height="39.54"/><rect x="1066.37" y="313.78" width="5.4" height="38.22"/><rect x="1073.40" y="313.78" width="5.4" height="38.22"/><rect x="1080.44" y="312.46" width="5.4" height="39.54"/><rect x="1087.47" y="312.46" width="5.4" height="39.54"/><rect x="1094.51" y="312.46" width="5.4" height="39.54"/><rect x="1101.55" y="313.78" width="5.4" height="38.22"/><rect x="1108.58" y="313.78" width="5.4" height="38.22"/><rect x="1115.62" y="313.78" width="5.4" height="38.22"/><rect x="1122.65" y="313.78" width="5.4" height="38.22"/><rect x="1129.68" y="313.78" width="5.4" height="38.22"/><rect x="1136.72" y="315.10" width="5.4" height="36.90"/><rect x="1143.75" y="312.46" width="5.4" height="39.54"/><rect x="1150.79" y="313.78" width="5.4" height="38.22"/><rect x="1157.83" y="312.46" width="5.4" height="39.54"/><rect x="1164.86" y="312.46" width="5.4" height="39.54"/><rect x="1171.89" y="312.46" width="5.4" height="39.54"/><rect x="1178.93" y="312.46" width="5.4" height="39.54"/><rect x="1185.96" y="315.10" width="5.4" height="36.90"/><rect x="1193.00" y="313.78" width="5.4" height="38.22"/><rect x="1200.04" y="313.78" width="5.4" height="38.22"/><rect x="1207.07" y="312.46" width="5.4" height="39.54"/><rect x="1214.11" y="313.78" width="5.4" height="38.22"/></g></svg><div class="r" style="left:195.0px;top:352.0px;width:1030.0px;height:1.0px;background:#cccccc;"></div><div class="t" style="left:170.5px;top:358.3px;width:40px;text-align:right;font-size:12.5px;line-height:12px;color:#999999;transform-origin:100% 50%;transform:rotate(-47.5deg)">22:52</div><div class="t" style="left:191.7px;top:358.3px;width:40px;text-align:right;font-size:12.5px;line-height:12px;color:#999999;transform-origin:100% 50%;transform:rotate(-47.5deg)">23:09</div><div class="t" style="left:212.8px;top:358.3px;width:40px;text-align:right;font-size:12.5px;line-height:12px;color:#999999;transform-origin:100% 50%;transform:rotate(-47.5deg)">23:26</div><div class="t" style="left:233.9px;top:358.3px;width:40px;text-align:right;font-size:12.5px;line-height:12px;color:#999999;transform-origin:100% 50%;transform:rotate(-47.5deg)">23:43</div><div class="t" style="left:255.0px;top:358.3px;width:40px;text-align:right;font-size:12.5px;line-height:12px;color:#999999;transform-origin:100% 50%;transform:rotate(-47.5deg)">00:00</div><div class="t" style="left:276.1px;top:358.3px;width:40px;text-align:right;font-size:12.5px;line-height:12px;color:#999999;transform-origin:100% 50%;transform:rotate(-47.5deg)">00:16</div><div class="t" style="left:297.2px;top:358.3px;width:40px;text-align:right;font-size:12.5px;line-height:12px;color:#999999;transform-origin:100% 50%;transform:rotate(-47.5deg)">00:33</div><div class="t" style="left:318.3px;top:358.3px;width:40px;text-align:right;font-size:12.5px;line-height:12px;color:#999999;transform-origin:100% 50%;transform:rotate(-47.5deg)">00:50</div><div class="t" style="left:339.4px;top:358.3px;width:40px;text-align:right;font-size:12.5px;line-height:12px;color:#999999;transform-origin:100% 50%;transform:rotate(-47.5deg)">01:07</div><div class="t" style="left:360.5px;top:358.3px;width:40px;text-align:right;font-size:12.5px;line-height:12px;color:#999999;transform-origin:100% 50%;transform:rotate(-47.5deg)">01:24</div><div class="t" style="left:381.6px;top:358.3px;width:40px;text-align:right;font-size:12.5px;line-height:12px;color:#999999;transform-origin:100% 50%;transform:rotate(-47.5deg)">01:40</div><div class="t" style="left:402.7px;top:358.3px;width:40px;text-align:right;font-size:12.5px;line-height:12px;color:#999999;transform-origin:100% 50%;transform:rotate(-47.5deg)">01:57</div><div class="t" style="left:423.8px;top:358.3px;width:40px;text-align:right;font-size:12.5px;line-height:12px;color:#999999;transform-origin:100% 50%;transform:rotate(-47.5deg)">02:13</div><div class="t" style="left:444.9px;top:358.3px;width:40px;text-align:right;font-size:12.5px;line-height:12px;color:#999999;transform-origin:100% 50%;transform:rotate(-47.5deg)">02:30</div><div class="t" style="left:466.0px;top:358.3px;width:40px;text-align:right;font-size:12.5px;line-height:12px;color:#999999;transform-origin:100% 50%;transform:rotate(-47.5deg)">02:46</div><div class="t" style="left:487.1px;top:358.3px;width:40px;text-align:right;font-size:12.5px;line-height:12px;color:#999999;transform-origin:100% 50%;transform:rotate(-47.5deg)">03:03</div><div class="t" style="left:508.2px;top:358.3px;width:40px;text-align:right;font-size:12.5px;line-height:12px;color:#999999;transform-origin:100% 50%;transform:rotate(-47.5deg)">03:20</div><div class="t" style="left:529.3px;top:358.3px;width:40px;text-align:right;font-size:12.5px;line-height:12px;color:#999999;transform-origin:100% 50%;transform:rotate(-47.5deg)">03:37</div><div class="t" style="left:550.4px;top:358.3px;width:40px;text-align:right;font-size:12.5px;line-height:12px;color:#999999;transform-origin:100% 50%;transform:rotate(-47.5deg)">03:53</div><div class="t" style="left:571.5px;top:358.3px;width:40px;text-align:right;font-size:12.5px;line-height:12px;color:#999999;transform-origin:100% 50%;transform:rotate(-47.5deg)">04:10</div><div class="t" style="left:592.7px;top:358.3px;width:40px;text-align:right;font-size:12.5px;line-height:12px;color:#999999;transform-origin:100% 50%;transform:rotate(-47.5deg)">04:27</div><div class="t" style="left:613.8px;top:358.3px;width:40px;text-align:right;font-size:12.5px;line-height:12px;color:#999999;transform-origin:100% 50%;transform:rotate(-47.5deg)">04:43</div><div class="t" style="left:634.9px;top:358.3px;width:40px;text-align:right;font-size:12.5px;line-height:12px;color:#999999;transform-origin:100% 50%;transform:rotate(-47.5deg)">05:00</div><div class="t" style="left:656.0px;top:358.3px;width:40px;text-align:right;font-size:12.5px;line-height:12px;color:#999999;transform-origin:100% 50%;transform:rotate(-47.5deg)">05:16</div><div class="t" style="left:677.1px;top:358.3px;width:40px;text-align:right;font-size:12.5px;line-height:12px;color:#999999;transform-origin:100% 50%;transform:rotate(-47.5deg)">05:33</div><div class="t" style="left:698.2px;top:358.3px;width:40px;text-align:right;font-size:12.5px;line-height:12px;color:#999999;transform-origin:100% 50%;transform:rotate(-47.5deg)">05:49</div><div class="t" style="left:719.3px;top:358.3px;width:40px;text-align:right;font-size:12.5px;line-height:12px;color:#999999;transform-origin:100% 50%;transform:rotate(-47.5deg)">06:06</div><div class="t" style="left:740.4px;top:358.3px;width:40px;text-align:right;font-size:12.5px;line-height:12px;color:#999999;transform-origin:100% 50%;transform:rotate(-47.5deg)">06:23</div><div class="t" style="left:761.5px;top:358.3px;width:40px;text-align:right;font-size:12.5px;line-height:12px;color:#999999;transform-origin:100% 50%;transform:rotate(-47.5deg)">06:39</div><div class="t" style="left:782.6px;top:358.3px;width:40px;text-align:right;font-size:12.5px;line-height:12px;color:#999999;transform-origin:100% 50%;transform:rotate(-47.5deg)">06:57</div><div class="t" style="left:803.7px;top:358.3px;width:40px;text-align:right;font-size:12.5px;line-height:12px;color:#999999;transform-origin:100% 50%;transform:rotate(-47.5deg)">07:13</div><div class="t" style="left:824.8px;top:358.3px;width:40px;text-align:right;font-size:12.5px;line-height:12px;color:#999999;transform-origin:100% 50%;transform:rotate(-47.5deg)">07:30</div><div class="t" style="left:845.9px;top:358.3px;width:40px;text-align:right;font-size:12.5px;line-height:12px;color:#999999;transform-origin:100% 50%;transform:rotate(-47.5deg)">07:47</div><div class="t" style="left:867.0px;top:358.3px;width:40px;text-align:right;font-size:12.5px;line-height:12px;color:#999999;transform-origin:100% 50%;transform:rotate(-47.5deg)">08:03</div><div class="t" style="left:888.1px;top:358.3px;width:40px;text-align:right;font-size:12.5px;line-height:12px;color:#999999;transform-origin:100% 50%;transform:rotate(-47.5deg)">08:20</div><div class="t" style="left:909.2px;top:358.3px;width:40px;text-align:right;font-size:12.5px;line-height:12px;color:#999999;transform-origin:100% 50%;transform:rotate(-47.5deg)">08:36</div><div class="t" style="left:930.3px;top:358.3px;width:40px;text-align:right;font-size:12.5px;line-height:12px;color:#999999;transform-origin:100% 50%;transform:rotate(-47.5deg)">08:53</div><div class="t" style="left:951.4px;top:358.3px;width:40px;text-align:right;font-size:12.5px;line-height:12px;color:#999999;transform-origin:100% 50%;transform:rotate(-47.5deg)">09:10</div><div class="t" style="left:972.5px;top:358.3px;width:40px;text-align:right;font-size:12.5px;line-height:12px;color:#999999;transform-origin:100% 50%;transform:rotate(-47.5deg)">09:27</div><div class="t" style="left:993.6px;top:358.3px;width:40px;text-align:right;font-size:12.5px;line-height:12px;color:#999999;transform-origin:100% 50%;transform:rotate(-47.5deg)">09:43</div><div class="t" style="left:1014.7px;top:358.3px;width:40px;text-align:right;font-size:12.5px;line-height:12px;color:#999999;transform-origin:100% 50%;transform:rotate(-47.5deg)">10:00</div><div class="t" style="left:1035.9px;top:358.3px;width:40px;text-align:right;font-size:12.5px;line-height:12px;color:#999999;transform-origin:100% 50%;transform:rotate(-47.5deg)">10:17</div><div class="t" style="left:1057.0px;top:358.3px;width:40px;text-align:right;font-size:12.5px;line-height:12px;color:#999999;transform-origin:100% 50%;transform:rotate(-47.5deg)">10:34</div><div class="t" style="left:1078.1px;top:358.3px;width:40px;text-align:right;font-size:12.5px;line-height:12px;color:#999999;transform-origin:100% 50%;transform:rotate(-47.5deg)">10:50</div><div class="t" style="left:1099.2px;top:358.3px;width:40px;text-align:right;font-size:12.5px;line-height:12px;color:#999999;transform-origin:100% 50%;transform:rotate(-47.5deg)">11:07</div><div class="t" style="left:1120.3px;top:358.3px;width:40px;text-align:right;font-size:12.5px;line-height:12px;color:#999999;transform-origin:100% 50%;transform:rotate(-47.5deg)">11:24</div><div class="t" style="left:1141.4px;top:358.3px;width:40px;text-align:right;font-size:12.5px;line-height:12px;color:#999999;transform-origin:100% 50%;transform:rotate(-47.5deg)">11:40</div><div class="t" style="left:1162.5px;top:358.3px;width:40px;text-align:right;font-size:12.5px;line-height:12px;color:#999999;transform-origin:100% 50%;transform:rotate(-47.5deg)">11:57</div><div class="r" style="left:165.0px;top:426.5px;width:1071.0px;height:600.0px;background:#ffffff;border-top:3px solid #d2d6de;border-radius:3px;"></div><div class="t" style="left:1005.0px;top:476.6px;font-size:14.0px;line-height:14.0px;color:#aaaaaa;letter-spacing:-0.68px;">Search:</div><div class="r" style="left:1057.0px;top:470.0px;width:169.0px;height:30.0px;background:#ffffff;border:1px solid #d2d6de;"></div><div class="r" style="left:176.0px;top:511.0px;width:1049.5px;height:38.0px;background:#ffffff;border:1px solid #f0f0f0;"></div><div class="t" style="left:185.6px;top:522.6px;font-size:14.0px;line-height:14.0px;color:#333333;font-weight:bold;letter-spacing:-0.48px;-webkit-text-stroke:0.25px #333;">Name</div><div class="t" style="left:268.2px;top:522.6px;font-size:14.0px;line-height:14.0px;color:#333333;font-weight:bold;letter-spacing:-0.47px;-webkit-text-stroke:0.25px #333;">Owner</div><div class="t" style="left:356.5px;top:522.6px;font-size:14.0px;line-height:14.0px;color:#333333;font-weight:bold;letter-spacing:-0.26px;-webkit-text-stroke:0.25px #333;">Type</div><div class="t" style="left:555.0px;top:522.6px;font-size:14.0px;line-height:14.0px;color:#333333;font-weight:bold;letter-spacing:-0.47px;-webkit-text-stroke:0.25px #333;">Favorite</div><div class="t" style="left:648.7px;top:522.6px;font-size:14.0px;line-height:14.0px;color:#333333;font-weight:bold;letter-spacing:-0.72px;-webkit-text-stroke:0.25px #333;">Group</div><div class="t" style="left:735.6px;top:522.6px;font-size:14.0px;line-height:14.0px;color:#333333;font-weight:bold;letter-spacing:-0.69px;-webkit-text-stroke:0.25px #333;">First Session</div><div class="t" style="left:854.6px;top:522.6px;font-size:14.0px;line-height:14.0px;color:#333333;font-weight:bold;letter-spacing:-0.78px;-webkit-text-stroke:0.25px #333;">Last Session</div><div class="t" style="left:985.1px;top:522.6px;font-size:14.0px;line-height:14.0px;color:#333333;font-weight:bold;letter-spacing:-0.63px;-webkit-text-stroke:0.25px #333;">Last IP</div><div class="t" style="left:1086.7px;top:522.6px;font-size:14.0px;line-height:14.0px;color:#333333;font-weight:bold;letter-spacing:-1.96px;-webkit-text-stroke:0.25px #333;">MAC</div><div class="t" style="left:1155.7px;top:522.6px;font-size:14.0px;line-height:14.0px;color:#333333;font-weight:bold;letter-spacing:-0.53px;-webkit-text-stroke:0.25px #333;">Status</div><svg style="left:236.6px;top:523.0px" width="16" height="15" viewBox="0 0 16 15"><g fill="#d6d6d6"><rect x="2.3" y="0" width="3.4" height="11"/><path d="M0 10.5 L8 10.5 L4 14 Z"/><rect x="9.4" y="3.5" width="3.5" height="10.5"/><path d="M7.2 3.7 L15.2 3.7 L11.2 0 Z"/></g></svg><svg style="left:324.6px;top:523.0px" width="16" height="15" viewBox="0 0 16 15"><g fill="#d6d6d6"><rect x="2.3" y="0" width="3.4" height="11"/><path d="M0 10.5 L8 10.5 L4 14 Z"/><rect x="9.4" y="3.5" width="3.5" height="10.5"/><path d="M7.2 3.7 L15.2 3.7 L11.2 0 Z"/></g></svg><svg style="left:518.6px;top:523.0px" width="16" height="15" viewBox="0 0 16 15"><g fill="#d6d6d6"><rect x="2.3" y="0" width="3.4" height="11"/><path d="M0 10.5 L8 10.5 L4 14 Z"/><rect x="9.4" y="3.5" width="3.5" height="10.5"/><path d="M7.2 3.7 L15.2 3.7 L11.2 0 Z"/></g></svg><svg style="left:617.6px;top:523.0px" width="16" height="15" viewBox="0 0 16 15"><g fill="#d6d6d6"><rect x="2.3" y="0" width="3.4" height="11"/><path d="M0 10.5 L8 10.5 L4 14 Z"/><rect x="9.4" y="3.5" width="3.5" height="10.5"/><path d="M7.2 3.7 L15.2 3.7 L11.2 0 Z"/></g></svg><svg style="left:703.6px;top:523.0px" width="16" height="15" viewBox="0 0 16 15"><g fill="#d6d6d6"><rect x="2.3" y="0" width="3.4" height="11"/><path d="M0 10.5 L8 10.5 L4 14 Z"/><rect x="9.4" y="3.5" width="3.5" height="10.5"/><path d="M7.2 3.7 L15.2 3.7 L11.2 0 Z"/></g></svg><svg style="left:822.6px;top:523.0px" width="16" height="15" viewBox="0 0 16 15"><g fill="#d6d6d6"><rect x="2.3" y="0" width="3.4" height="11"/><path d="M0 10.5 L8 10.5 L4 14 Z"/><rect x="9.4" y="3.5" width="3.5" height="10.5"/><path d="M7.2 3.7 L15.2 3.7 L11.2 0 Z"/></g></svg><svg style="left:953.6px;top:523.0px" width="16" height="15" viewBox="0 0 16 15"><g fill="#d6d6d6"><rect x="2.3" y="0" width="3.4" height="11"/><path d="M0 10.5 L8 10.5 L4 14 Z"/><rect x="9.4" y="3.5" width="3.5" height="10.5"/><path d="M7.2 3.7 L15.2 3.7 L11.2 0 Z"/></g></svg><svg style="left:1052.7px;top:522.0px" width="16" height="15" viewBox="0 0 16 15"><g fill="#999999"><rect x="1.8" y="0" width="3.3" height="10.5"/><path d="M0 10.2 L7.1 10.2 L3.55 13.8 Z"/><rect x="7.3" y="0" width="3.6" height="1.8"/><rect x="7.4" y="3.2" width="4.7" height="2.4"/><rect x="7.4" y="7" width="5.7" height="1.7"/><rect x="7.7" y="10" width="6.4" height="2.6"/></g></svg><svg style="left:1124.6px;top:523.0px" width="16" height="15" viewBox="0 0 16 15"><g fill="#d6d6d6"><rect x="2.3" y="0" width="3.4" height="11"/><path d="M0 10.5 L8 10.5 L4 14 Z"/><rect x="9.4" y="3.5" width="3.5" height="10.5"/><path d="M7.2 3.7 L15.2 3.7 L11.2 0 Z"/></g></svg><svg style="left:1202.6px;top:523.0px" width="16" height="15" viewBox="0 0 16 15"><g fill="#d6d6d6"><rect x="2.3" y="0" width="3.4" height="11"/><path d="M0 10.5 L8 10.5 L4 14 Z"/><rect x="9.4" y="3.5" width="3.5" height="10.5"/><path d="M7.2 3.7 L15.2 3.7 L11.2 0 Z"/></g></svg><div class="r" style="left:176.0px;top:549.5px;width:1049.5px;height:29.0px;background:#f9f9f9;"></div><div class="r" style="left:176.0px;top:549.5px;width:1049.5px;height:1.0px;background:#f1f1f1;"></div><div class="t" style="left:181.0px;top:556.9px;font-size:14.0px;line-height:14.0px;color:#3c8dbc;letter-spacing:-0.62px;">device 1</div><div class="t" style="left:264.0px;top:556.9px;font-size:14.0px;line-height:14.0px;color:#333333;letter-spacing:-1.09px;">House</div><div class="t" style="left:352.0px;top:556.9px;font-size:14.0px;line-height:14.0px;color:#333333;letter-spacing:-0.67px;">Router</div><div class="t" style="left:645.0px;top:556.9px;font-size:14.0px;line-height:14.0px;color:#333333;letter-spacing:-0.67px;">Always on</div><div class="t" style="left:731.5px;top:556.9px;font-size:14.0px;line-height:14.0px;color:#333333;letter-spacing:-0.61px;">2021-01-01  00:00</div><div class="t" style="left:850.5px;top:556.9px;font-size:14.0px;line-height:14.0px;color:#333333;letter-spacing:-0.64px;">2022-12-18  22:05.47</div><div class="t" style="left:981.0px;top:556.9px;font-size:14.0px;line-height:14.0px;color:#333333;letter-spacing:-0.73px;">192.168.1.52</div><div class="r" style="left:1161.0px;top:556.0px;width:50.0px;height:17.5px;background:#00a65a;border-radius:9px;"></div><div class="t" style="left:1169.2px;top:558.6px;font-size:12.4px;line-height:12.4px;color:#ffffff;font-weight:bold;letter-spacing:-0.50px;-webkit-text-stroke:0.25px #fff;">Online</div><div class="r" style="left:259.0px;top:549.5px;width:1.0px;height:29.0px;background:#f1f1f1;"></div><div class="r" style="left:347.0px;top:549.5px;width:1.0px;height:29.0px;background:#f1f1f1;"></div><div class="r" style="left:541.0px;top:549.5px;width:1.0px;height:29.0px;background:#f1f1f1;"></div><div class="r" style="left:640.0px;top:549.5px;width:1.0px;height:29.0px;background:#f1f1f1;"></div><div class="r" style="left:726.0px;top:549.5px;width:1.0px;height:29.0px;background:#f1f1f1;"></div><div class="r" style="left:845.0px;top:549.5px;width:1.0px;height:29.0px;background:#f1f1f1;"></div><div class="r" style="left:976.0px;top:549.5px;width:1.0px;height:29.0px;background:#f1f1f1;"></div><div class="r" style="left:1074.0px;top:549.5px;width:1.0px;height:29.0px;background:#f1f1f1;"></div><div class="r" style="left:1147.0px;top:549.5px;width:1.0px;height:29.0px;background:#f1f1f1;"></div><div class="r" style="left:176.0px;top:578.5px;width:1049.5px;height:29.0px;background:#ffffff;"></div><div class="r" style="left:176.0px;top:578.5px;width:1049.5px;height:1.0px;background:#f1f1f1;"></div><div class="t" style="left:181.0px;top:585.9px;font-size:14.0px;line-height:14.0px;color:#3c8dbc;letter-spacing:-0.62px;">device 2</div><div class="t" style="left:264.0px;top:585.9px;font-size:14.0px;line-height:14.0px;color:#333333;letter-spacing:-1.09px;">House</div><div class="t" style="left:352.0px;top:585.9px;font-size:14.0px;line-height:14.0px;color:#333333;letter-spacing:-0.67px;">Router</div><div class="t" style="left:731.5px;top:585.9px;font-size:14.0px;line-height:14.0px;color:#333333;letter-spacing:-0.61px;">2022-02-12  22:05</div><div class="t" style="left:850.5px;top:585.9px;font-size:14.0px;line-height:14.0px;color:#333333;letter-spacing:-0.63px;">2022-1-18  22:05.34</div><div class="t" style="left:981.0px;top:585.9px;font-size:14.0px;line-height:14.0px;color:#333333;letter-spacing:-0.73px;">192.168.1.53</div><div class="r" style="left:1161.0px;top:585.0px;width:50.0px;height:17.5px;background:#00a65a;border-radius:9px;"></div><div class="t" style="left:1169.2px;top:587.6px;font-size:12.4px;line-height:12.4px;color:#ffffff;font-weight:bold;letter-spacing:-0.50px;-webkit-text-stroke:0.25px #fff;">Online</div><div class="r" style="left:259.0px;top:578.5px;width:1.0px;height:29.0px;background:#f1f1f1;"></div><div class="r" style="left:347.0px;top:578.5px;width:1.0px;height:29.0px;background:#f1f1f1;"></div><div class="r" style="left:541.0px;top:578.5px;width:1.0px;height:29.0px;background:#f1f1f1;"></div><div class="r" style="left:640.0px;top:578.5px;width:1.0px;height:29.0px;background:#f1f1f1;"></div><div class="r" style="left:726.0px;top:578.5px;width:1.0px;height:29.0px;background:#f1f1f1;"></div><div class="r" style="left:845.0px;top:578.5px;width:1.0px;height:29.0px;background:#f1f1f1;"></div><div class="r" style="left:976.0px;top:578.5px;width:1.0px;height:29.0px;background:#f1f1f1;"></div><div class="r" style="left:1074.0px;top:578.5px;width:1.0px;height:29.0px;background:#f1f1f1;"></div><div class="r" style="left:1147.0px;top:578.5px;width:1.0px;height:29.0px;background:#f1f1f1;"></div><div class="r" style="left:176.0px;top:607.5px;width:1049.5px;height:29.0px;background:#f9f9f9;"></div><div class="r" style="left:176.0px;top:607.5px;width:1049.5px;height:1.0px;background:#f1f1f1;"></div><div class="t" style="left:181.0px;top:614.9px;font-size:14.0px;line-height:14.0px;color:#3c8dbc;letter-spacing:-0.62px;">device 3</div><div class="t" style="left:264.0px;top:614.9px;font-size:14.0px;line-height:14.0px;color:#333333;letter-spacing:-1.09px;">House</div><div class="t" style="left:731.5px;top:614.9px;font-size:14.0px;line-height:14.0px;color:#333333;letter-spacing:-0.61px;">2022-02-12  22:05</div><div class="t" style="left:850.5px;top:614.9px;font-size:14.0px;line-height:14.0px;color:#333333;letter-spacing:-0.64px;">2022-10-25  22:05.23</div><div class="t" style="left:981.0px;top:614.9px;font-size:14.0px;line-height:14.0px;color:#333333;letter-spacing:-0.73px;">192.168.1.54</div><div class="r" style="left:1161.0px;top:614.0px;width:50.0px;height:17.5px;background:#b2b6be;border-radius:9px;"></div><div class="t" style="left:1169.2px;top:616.6px;font-size:12.4px;line-height:12.4px;color:#ffffff;font-weight:bold;letter-spacing:-0.52px;-webkit-text-stroke:0.25px #fff;">Offline</div><div class="r" style="left:259.0px;top:607.5px;width:1.0px;height:29.0px;background:#f1f1f1;"></div><div class="r" style="left:347.0px;top:607.5px;width:1.0px;height:29.0px;background:#f1f1f1;"></div><div class="r" style="left:541.0px;top:607.5px;width:1.0px;height:29.0px;background:#f1f1f1;"></div><div class="r" style="left:640.0px;top:607.5px;width:1.0px;height:29.0px;background:#f1f1f1;"></div><div class="r" style="left:726.0px;top:607.5px;width:1.0px;height:29.0px;background:#f1f1f1;"></div><div class="r" style="left:845.0px;top:607.5px;width:1.0px;height:29.0px;background:#f1f1f1;"></div><div class="r" style="left:976.0px;top:607.5px;width:1.0px;height:29.0px;background:#f1f1f1;"></div><div class="r" style="left:1074.0px;top:607.5px;width:1.0px;height:29.0px;background:#f1f1f1;"></div><div class="r" style="left:1147.0px;top:607.5px;width:1.0px;height:29.0px;background:#f1f1f1;"></div><div class="r" style="left:176.0px;top:636.5px;width:1049.5px;height:29.0px;background:#ffffff;"></div><div class="r" style="left:176.0px;top:636.5px;width:1049.5px;height:1.0px;background:#f1f1f1;"></div><div class="t" style="left:181.0px;top:643.9px;font-size:14.0px;line-height:14.0px;color:#3c8dbc;letter-spacing:-0.62px;">device 4</div><div class="t" style="left:264.0px;top:643.9px;font-size:14.0px;line-height:14.0px;color:#333333;letter-spacing:-1.09px;">House</div><div class="t" style="left:731.5px;top:643.9px;font-size:14.0px;line-height:14.0px;color:#333333;letter-spacing:-0.61px;">2022-03-10  03:55</div><div class="t" style="left:850.5px;top:643.9px;font-size:14.0px;line-height:14.0px;color:#333333;letter-spacing:-0.63px;">2022-4-23  22:05.49</div><div class="t" style="left:981.0px;top:643.9px;font-size:14.0px;line-height:14.0px;color:#333333;letter-spacing:-0.73px;">192.168.1.55</div><div class="r" style="left:1161.0px;top:643.0px;width:50.0px;height:17.5px;background:#b2b6be;border-radius:9px;"></div><div class="t" style="left:1169.2px;top:645.6px;font-size:12.4px;line-height:12.4px;color:#ffffff;font-weight:bold;letter-spacing:-0.52px;-webkit-text-stroke:0.25px #fff;">Offline</div><div class="r" style="left:259.0px;top:636.5px;width:1.0px;height:29.0px;background:#f1f1f1;"></div><div class="r" style="left:347.0px;top:636.5px;width:1.0px;height:29.0px;background:#f1f1f1;"></div><div class="r" style="left:541.0px;top:636.5px;width:1.0px;height:29.0px;background:#f1f1f1;"></div><div class="r" style="left:640.0px;top:636.5px;width:1.0px;height:29.0px;background:#f1f1f1;"></div><div class="r" style="left:726.0px;top:636.5px;width:1.0px;height:29.0px;background:#f1f1f1;"></div><div class="r" style="left:845.0px;top:636.5px;width:1.0px;height:29.0px;background:#f1f1f1;"></div><div class="r" style="left:976.0px;top:636.5px;width:1.0px;height:29.0px;background:#f1f1f1;"></div><div class="r" style="left:1074.0px;top:636.5px;width:1.0px;height:29.0px;background:#f1f1f1;"></div><div class="r" style="left:1147.0px;top:636.5px;width:1.0px;height:29.0px;background:#f1f1f1;"></div><div class="r" style="left:176.0px;top:665.5px;width:1049.5px;height:29.0px;background:#f9f9f9;"></div><div class="r" style="left:176.0px;top:665.5px;width:1049.5px;height:1.0px;background:#f1f1f1;"></div><div class="t" style="left:181.0px;top:672.9px;font-size:14.0px;line-height:14.0px;color:#3c8dbc;letter-spacing:-0.62px;">device 5</div><div class="t" style="left:264.0px;top:672.9px;font-size:14.0px;line-height:14.0px;color:#333333;letter-spacing:-1.09px;">House</div><div class="t" style="left:731.5px;top:672.9px;font-size:14.0px;line-height:14.0px;color:#333333;letter-spacing:-0.61px;">2022-02-12  22:05</div><div class="t" style="left:850.5px;top:672.9px;font-size:14.0px;line-height:14.0px;color:#333333;letter-spacing:-0.63px;">2022-3-14  22:05.44</div><div class="t" style="left:981.0px;top:672.9px;font-size:14.0px;line-height:14.0px;color:#333333;letter-spacing:-0.73px;">192.168.1.56</div><div class="r" style="left:1161.0px;top:672.0px;width:50.0px;height:17.5px;background:#b2b6be;border-radius:9px;"></div><div class="t" style="left:1169.2px;top:674.6px;font-size:12.4px;line-height:12.4px;color:#ffffff;font-weight:bold;letter-spacing:-0.52px;-webkit-text-stroke:0.25px #fff;">Offline</div><div class="r" style="left:259.0px;top:665.5px;width:1.0px;height:29.0px;background:#f1f1f1;"></div><div class="r" style="left:347.0px;top:665.5px;width:1.0px;height:29.0px;background:#f1f1f1;"></div><div class="r" style="left:541.0px;top:665.5px;width:1.0px;height:29.0px;background:#f1f1f1;"></div><div class="r" style="left:640.0px;top:665.5px;width:1.0px;height:29.0px;background:#f1f1f1;"></div><div class="r" style="left:726.0px;top:665.5px;width:1.0px;height:29.0px;background:#f1f1f1;"></div><div class="r" style="left:845.0px;top:665.5px;width:1.0px;height:29.0px;background:#f1f1f1;"></div><div class="r" style="left:976.0px;top:665.5px;width:1.0px;height:29.0px;background:#f1f1f1;"></div><div class="r" style="left:1074.0px;top:665.5px;width:1.0px;height:29.0px;background:#f1f1f1;"></div><div class="r" style="left:1147.0px;top:665.5px;width:1.0px;height:29.0px;background:#f1f1f1;"></div><div class="r" style="left:176.0px;top:694.5px;width:1049.5px;height:29.0px;background:#ffffff;"></div><div class="r" style="left:176.0px;top:694.5px;width:1049.5px;height:1.0px;background:#f1f1f1;"></div><div class="t" style="left:181.0px;top:701.9px;font-size:14.0px;line-height:14.0px;color:#3c8dbc;letter-spacing:-0.62px;">device 6</div><div class="t" style="left:264.0px;top:701.9px;font-size:14.0px;line-height:14.0px;color:#333333;letter-spacing:-1.09px;">House</div><div class="t" style="left:731.5px;top:701.9px;font-size:14.0px;line-height:14.0px;color:#333333;letter-spacing:-0.61px;">2022-02-12  22:05</div><div class="t" style="left:850.5px;top:701.9px;font-size:14.0px;line-height:14.0px;color:#333333;letter-spacing:-0.63px;">2022-7-27  22:05.28</div><div class="t" style="left:981.0px;top:701.9px;font-size:14.0px;line-height:14.0px;color:#333333;letter-spacing:-0.73px;">192.168.1.57</div><div class="r" style="left:1161.0px;top:701.0px;width:50.0px;height:17.5px;background:#00a65a;border-radius:9px;"></div><div class="t" style="left:1169.2px;top:703.6px;font-size:12.4px;line-height:12.4px;color:#ffffff;font-weight:bold;letter-spacing:-0.50px;-webkit-text-stroke:0.25px #fff;">Online</div><div class="r" style="left:259.0px;top:694.5px;width:1.0px;height:29.0px;background:#f1f1f1;"></div><div class="r" style="left:347.0px;top:694.5px;width:1.0px;height:29.0px;background:#f1f1f1;"></div><div class="r" style="left:541.0px;top:694.5px;width:1.0px;height:29.0px;background:#f1f1f1;"></div><div class="r" style="left:640.0px;top:694.5px;width:1.0px;height:29.0px;background:#f1f1f1;"></div><div class="r" style="left:726.0px;top:694.5px;width:1.0px;height:29.0px;background:#f1f1f1;"></div><div class="r" style="left:845.0px;top:694.5px;width:1.0px;height:29.0px;background:#f1f1f1;"></div><div class="r" style="left:976.0px;top:694.5px;width:1.0px;height:29.0px;background:#f1f1f1;"></div><div class="r" style="left:1074.0px;top:694.5px;width:1.0px;height:29.0px;background:#f1f1f1;"></div><div class="r" style="left:1147.0px;top:694.5px;width:1.0px;height:29.0px;background:#f1f1f1;"></div><div class="r" style="left:176.0px;top:723.5px;width:1049.5px;height:29.0px;background:#f9f9f9;"></div><div class="r" style="left:176.0px;top:723.5px;width:1049.5px;height:1.0px;background:#f1f1f1;"></div><div class="t" style="left:181.0px;top:730.9px;font-size:14.0px;line-height:14.0px;color:#3c8dbc;letter-spacing:-0.62px;">device 7</div><div class="t" style="left:264.0px;top:730.9px;font-size:14.0px;line-height:14.0px;color:#333333;letter-spacing:-1.09px;">House</div><div class="t" style="left:731.5px;top:730.9px;font-size:14.0px;line-height:14.0px;color:#333333;letter-spacing:-0.61px;">2022-02-12  22:05</div><div class="t" style="left:850.5px;top:730.9px;font-size:14.0px;line-height:14.0px;color:#333333;letter-spacing:-0.63px;">2022-9-19  22:05.26</div><div class="t" style="left:981.0px;top:730.9px;font-size:14.0px;line-height:14.0px;color:#333333;letter-spacing:-0.73px;">192.168.1.58</div><div class="r" style="left:1161.0px;top:730.0px;width:50.0px;height:17.5px;background:#00a65a;border-radius:9px;"></div><div class="t" style="left:1169.2px;top:732.6px;font-size:12.4px;line-height:12.4px;color:#ffffff;font-weight:bold;letter-spacing:-0.50px;-webkit-text-stroke:0.25px #fff;">Online</div><div class="r" style="left:259.0px;top:723.5px;width:1.0px;height:29.0px;background:#f1f1f1;"></div><div class="r" style="left:347.0px;top:723.5px;width:1.0px;height:29.0px;background:#f1f1f1;"></div><div class="r" style="left:541.0px;top:723.5px;width:1.0px;height:29.0px;background:#f1f1f1;"></div><div class="r" style="left:640.0px;top:723.5px;width:1.0px;height:29.0px;background:#f1f1f1;"></div><div class="r" style="left:726.0px;top:723.5px;width:1.0px;height:29.0px;background:#f1f1f1;"></div><div class="r" style="left:845.0px;top:723.5px;width:1.0px;height:29.0px;background:#f1f1f1;"></div><div class="r" style="left:976.0px;top:723.5px;width:1.0px;height:29.0px;background:#f1f1f1;"></div><div class="r" style="left:1074.0px;top:723.5px;width:1.0px;height:29.0px;background:#f1f1f1;"></div><div class="r" style="left:1147.0px;top:723.5px;width:1.0px;height:29.0px;background:#f1f1f1;"></div><div class="r" style="left:176.0px;top:752.5px;width:1049.5px;height:29.0px;background:#ffffff;"></div><div class="r" style="left:176.0px;top:752.5px;width:1049.5px;height:1.0px;background:#f1f1f1;"></div><div class="t" style="left:181.0px;top:759.9px;font-size:14.0px;line-height:14.0px;color:#3c8dbc;letter-spacing:-0.62px;">device 8</div><div class="t" style="left:264.0px;top:759.9px;font-size:14.0px;line-height:14.0px;color:#333333;letter-spacing:-1.09px;">House</div><div class="t" style="left:731.5px;top:759.9px;font-size:14.0px;line-height:14.0px;color:#333333;letter-spacing:-0.61px;">2022-02-12  22:05</div><div class="t" style="left:850.5px;top:759.9px;font-size:14.0px;line-height:14.0px;color:#333333;letter-spacing:-0.63px;">2022-7-21  22:05.56</div><div class="t" style="left:981.0px;top:759.9px;font-size:14.0px;line-height:14.0px;color:#333333;letter-spacing:-0.73px;">192.168.1.59</div><div class="r" style="left:1161.0px;top:759.0px;width:50.0px;height:17.5px;background:#00a65a;border-radius:9px;"></div><div class="t" style="left:1169.2px;top:761.6px;font-size:12.4px;line-height:12.4px;color:#ffffff;font-weight:bold;letter-spacing:-0.50px;-webkit-text-stroke:0.25px #fff;">Online</div><div class="r" style="left:259.0px;top:752.5px;width:1.0px;height:29.0px;background:#f1f1f1;"></div><div class="r" style="left:347.0px;top:752.5px;width:1.0px;height:29.0px;background:#f1f1f1;"></div><div class="r" style="left:541.0px;top:752.5px;width:1.0px;height:29.0px;background:#f1f1f1;"></div><div class="r" style="left:640.0px;top:752.5px;width:1.0px;height:29.0px;background:#f1f1f1;"></div><div class="r" style="left:726.0px;top:752.5px;width:1.0px;height:29.0px;background:#f1f1f1;"></div><div class="r" style="left:845.0px;top:752.5px;width:1.0px;height:29.0px;background:#f1f1f1;"></div><div class="r" style="left:976.0px;top:752.5px;width:1.0px;height:29.0px;background:#f1f1f1;"></div><div class="r" style="left:1074.0px;top:752.5px;width:1.0px;height:29.0px;background:#f1f1f1;"></div><div class="r" style="left:1147.0px;top:752.5px;width:1.0px;height:29.0px;background:#f1f1f1;"></div><div class="r" style="left:176.0px;top:781.5px;width:1049.5px;height:29.0px;background:#f9f9f9;"></div><div class="r" style="left:176.0px;top:781.5px;width:1049.5px;height:1.0px;background:#f1f1f1;"></div><div class="t" style="left:181.0px;top:788.9px;font-size:14.0px;line-height:14.0px;color:#3c8dbc;letter-spacing:-0.62px;">device 9</div><div class="t" style="left:264.0px;top:788.9px;font-size:14.0px;line-height:14.0px;color:#333333;letter-spacing:-1.09px;">House</div><div class="t" style="left:731.5px;top:788.9px;font-size:14.0px;line-height:14.0px;color:#333333;letter-spacing:-0.61px;">2022-02-12  22:05</div><div class="t" style="left:850.5px;top:788.9px;font-size:14.0px;line-height:14.0px;color:#333333;letter-spacing:-0.63px;">2022-4-18  22:05.48</div><div class="t" style="left:981.0px;top:788.9px;font-size:14.0px;line-height:14.0px;color:#333333;letter-spacing:-0.73px;">192.168.1.60</div><div class="r" style="left:1161.0px;top:788.0px;width:50.0px;height:17.5px;background:#00a65a;border-radius:9px;"></div><div class="t" style="left:1169.2px;top:790.6px;font-size:12.4px;line-height:12.4px;color:#ffffff;font-weight:bold;letter-spacing:-0.50px;-webkit-text-stroke:0.25px #fff;">Online</div><div class="r" style="left:259.0px;top:781.5px;width:1.0px;height:29.0px;background:#f1f1f1;"></div><div class="r" style="left:347.0px;top:781.5px;width:1.0px;height:29.0px;background:#f1f1f1;"></div><div class="r" style="left:541.0px;top:781.5px;width:1.0px;height:29.0px;background:#f1f1f1;"></div><div class="r" style="left:640.0px;top:781.5px;width:1.0px;height:29.0px;background:#f1f1f1;"></div><div class="r" style="left:726.0px;top:781.5px;width:1.0px;height:29.0px;background:#f1f1f1;"></div><div class="r" style="left:845.0px;top:781.5px;width:1.0px;height:29.0px;background:#f1f1f1;"></div><div class="r" style="left:976.0px;top:781.5px;width:1.0px;height:29.0px;background:#f1f1f1;"></div><div class="r" style="left:1074.0px;top:781.5px;width:1.0px;height:29.0px;background:#f1f1f1;"></div><div class="r" style="left:1147.0px;top:781.5px;width:1.0px;height:29.0px;background:#f1f1f1;"></div><div class="r" style="left:176.0px;top:810.5px;width:1049.5px;height:29.0px;background:#ffffff;"></div><div class="r" style="left:176.0px;top:810.5px;width:1049.5px;height:1.0px;background:#f1f1f1;"></div><div class="t" style="left:181.0px;top:817.9px;font-size:14.0px;line-height:14.0px;color:#3c8dbc;letter-spacing:-0.63px;">device 10</div><div class="t" style="left:264.0px;top:817.9px;font-size:14.0px;line-height:14.0px;color:#333333;letter-spacing:-1.09px;">House</div><div class="t" style="left:731.5px;top:817.9px;font-size:14.0px;line-height:14.0px;color:#333333;letter-spacing:-0.61px;">2022-07-02  08:15</div><div class="t" style="left:850.5px;top:817.9px;font-size:14.0px;line-height:14.0px;color:#333333;letter-spacing:-0.63px;">2022-5-21  22:05.47</div><div class="t" style="left:981.0px;top:817.9px;font-size:14.0px;line-height:14.0px;color:#333333;letter-spacing:-0.73px;">192.168.1.61</div><div class="r" style="left:1161.0px;top:817.0px;width:50.0px;height:17.5px;background:#00a65a;border-radius:9px;"></div><div class="t" style="left:1169.2px;top:819.6px;font-size:12.4px;line-height:12.4px;color:#ffffff;font-weight:bold;letter-spacing:-0.50px;-webkit-text-stroke:0.25px #fff;">Online</div><div class="r" style="left:259.0px;top:810.5px;width:1.0px;height:29.0px;background:#f1f1f1;"></div><div class="r" style="left:347.0px;top:810.5px;width:1.0px;height:29.0px;background:#f1f1f1;"></div><div class="r" style="left:541.0px;top:810.5px;width:1.0px;height:29.0px;background:#f1f1f1;"></div><div class="r" style="left:640.0px;top:810.5px;width:1.0px;height:29.0px;background:#f1f1f1;"></div><div class="r" style="left:726.0px;top:810.5px;width:1.0px;height:29.0px;background:#f1f1f1;"></div><div class="r" style="left:845.0px;top:810.5px;width:1.0px;height:29.0px;background:#f1f1f1;"></div><div class="r" style="left:976.0px;top:810.5px;width:1.0px;height:29.0px;background:#f1f1f1;"></div><div class="r" style="left:1074.0px;top:810.5px;width:1.0px;height:29.0px;background:#f1f1f1;"></div><div class="r" style="left:1147.0px;top:810.5px;width:1.0px;height:29.0px;background:#f1f1f1;"></div><div class="r" style="left:176.0px;top:839.5px;width:1049.5px;height:29.0px;background:#f9f9f9;"></div><div class="r" style="left:176.0px;top:839.5px;width:1049.5px;height:1.0px;background:#f1f1f1;"></div><div class="t" style="left:181.0px;top:846.9px;font-size:14.0px;line-height:14.0px;color:#3c8dbc;letter-spacing:-0.62px;">device 11</div><div class="t" style="left:264.0px;top:846.9px;font-size:14.0px;line-height:14.0px;color:#333333;letter-spacing:-1.09px;">House</div><div class="t" style="left:731.5px;top:846.9px;font-size:14.0px;line-height:14.0px;color:#333333;letter-spacing:-0.61px;">2022-02-12  22:05</div><div class="t" style="left:850.5px;top:846.9px;font-size:14.0px;line-height:14.0px;color:#333333;letter-spacing:-0.62px;">2022-7-1  22:05.15</div><div class="t" style="left:981.0px;top:846.9px;font-size:14.0px;line-height:14.0px;color:#333333;letter-spacing:-0.73px;">192.168.1.62</div><div class="r" style="left:1161.0px;top:846.0px;width:50.0px;height:17.5px;background:#00a65a;border-radius:9px;"></div><div class="t" style="left:1169.2px;top:848.6px;font-size:12.4px;line-height:12.4px;color:#ffffff;font-weight:bold;letter-spacing:-0.50px;-webkit-text-stroke:0.25px #fff;">Online</div><div class="r" style="left:259.0px;top:839.5px;width:1.0px;height:29.0px;background:#f1f1f1;"></div><div class="r" style="left:347.0px;top:839.5px;width:1.0px;height:29.0px;background:#f1f1f1;"></div><div class="r" style="left:541.0px;top:839.5px;width:1.0px;height:29.0px;background:#f1f1f1;"></div><div class="r" style="left:640.0px;top:839.5px;width:1.0px;height:29.0px;background:#f1f1f1;"></div><div class="r" style="left:726.0px;top:839.5px;width:1.0px;height:29.0px;background:#f1f1f1;"></div><div class="r" style="left:845.0px;top:839.5px;width:1.0px;height:29.0px;background:#f1f1f1;"></div><div class="r" style="left:976.0px;top:839.5px;width:1.0px;height:29.0px;background:#f1f1f1;"></div><div class="r" style="left:1074.0px;top:839.5px;width:1.0px;height:29.0px;background:#f1f1f1;"></div><div class="r" style="left:1147.0px;top:839.5px;width:1.0px;height:29.0px;background:#f1f1f1;"></div><div class="r" style="left:176.0px;top:868.5px;width:1049.5px;height:29.0px;background:#ffffff;"></div><div class="r" style="left:176.0px;top:868.5px;width:1049.5px;height:1.0px;background:#f1f1f1;"></div><div class="t" style="left:181.0px;top:875.9px;font-size:14.0px;line-height:14.0px;color:#3c8dbc;letter-spacing:-0.63px;">device 12</div><div class="t" style="left:264.0px;top:875.9px;font-size:14.0px;line-height:14.0px;color:#333333;letter-spacing:-1.09px;">House</div><div class="t" style="left:352.0px;top:875.9px;font-size:14.0px;line-height:14.0px;color:#333333;letter-spacing:-0.68px;">Laptop</div><div class="t" style="left:731.5px;top:875.9px;font-size:14.0px;line-height:14.0px;color:#333333;letter-spacing:-0.61px;">2022-02-17  08:05</div><div class="t" style="left:850.5px;top:875.9px;font-size:14.0px;line-height:14.0px;color:#333333;letter-spacing:-0.63px;">2022-1-19  22:05.30</div><div class="t" style="left:981.0px;top:875.9px;font-size:14.0px;line-height:14.0px;color:#333333;letter-spacing:-0.73px;">192.168.1.63</div><div class="r" style="left:1161.0px;top:875.0px;width:50.0px;height:17.5px;background:#b2b6be;border-radius:9px;"></div><div class="t" style="left:1169.2px;top:877.6px;font-size:12.4px;line-height:12.4px;color:#ffffff;font-weight:bold;letter-spacing:-0.52px;-webkit-text-stroke:0.25px #fff;">Offline</div><div class="r" style="left:259.0px;top:868.5px;width:1.0px;height:29.0px;background:#f1f1f1;"></div><div class="r" style="left:347.0px;top:868.5px;width:1.0px;height:29.0px;background:#f1f1f1;"></div><div class="r" style="left:541.0px;top:868.5px;width:1.0px;height:29.0px;background:#f1f1f1;"></div><div class="r" style="left:640.0px;top:868.5px;width:1.0px;height:29.0px;background:#f1f1f1;"></div><div class="r" style="left:726.0px;top:868.5px;width:1.0px;height:29.0px;background:#f1f1f1;"></div><div class="r" style="left:845.0px;top:868.5px;width:1.0px;height:29.0px;background:#f1f1f1;"></div><div class="r" style="left:976.0px;top:868.5px;width:1.0px;height:29.0px;background:#f1f1f1;"></div><div class="r" style="left:1074.0px;top:868.5px;width:1.0px;height:29.0px;background:#f1f1f1;"></div><div class="r" style="left:1147.0px;top:868.5px;width:1.0px;height:29.0px;background:#f1f1f1;"></div><div class="r" style="left:176.0px;top:897.5px;width:1049.5px;height:29.0px;background:#f9f9f9;"></div><div class="r" style="left:176.0px;top:897.5px;width:1049.5px;height:1.0px;background:#f1f1f1;"></div><div class="t" style="left:181.0px;top:904.9px;font-size:14.0px;line-height:14.0px;color:#3c8dbc;letter-spacing:-0.63px;">device 13</div><div class="t" style="left:264.0px;top:904.9px;font-size:14.0px;line-height:14.0px;color:#333333;letter-spacing:-1.09px;">House</div><div class="t" style="left:731.5px;top:904.9px;font-size:14.0px;line-height:14.0px;color:#333333;letter-spacing:-0.61px;">2022-07-19  23:45</div><div class="t" style="left:850.5px;top:904.9px;font-size:14.0px;line-height:14.0px;color:#333333;letter-spacing:-0.63px;">2022-8-28  22:05.51</div><div class="t" style="left:981.0px;top:904.9px;font-size:14.0px;line-height:14.0px;color:#333333;letter-spacing:-0.73px;">192.168.1.64</div><div class="r" style="left:1161.0px;top:904.0px;width:50.0px;height:17.5px;background:#00a65a;border-radius:9px;"></div><div class="t" style="left:1169.2px;top:906.6px;font-size:12.4px;line-height:12.4px;color:#ffffff;font-weight:bold;letter-spacing:-0.50px;-webkit-text-stroke:0.25px #fff;">Online</div><div class="r" style="left:259.0px;top:897.5px;width:1.0px;height:29.0px;background:#f1f1f1;"></div><div class="r" style="left:347.0px;top:897.5px;width:1.0px;height:29.0px;background:#f1f1f1;"></div><div class="r" style="left:541.0px;top:897.5px;width:1.0px;height:29.0px;background:#f1f1f1;"></div><div class="r" style="left:640.0px;top:897.5px;width:1.0px;height:29.0px;background:#f1f1f1;"></div><div class="r" style="left:726.0px;top:897.5px;width:1.0px;height:29.0px;background:#f1f1f1;"></div><div class="r" style="left:845.0px;top:897.5px;width:1.0px;height:29.0px;background:#f1f1f1;"></div><div class="r" style="left:976.0px;top:897.5px;width:1.0px;height:29.0px;background:#f1f1f1;"></div><div class="r" style="left:1074.0px;top:897.5px;width:1.0px;height:29.0px;background:#f1f1f1;"></div><div class="r" style="left:1147.0px;top:897.5px;width:1.0px;height:29.0px;background:#f1f1f1;"></div><div class="r" style="left:176.0px;top:926.5px;width:1049.5px;height:29.0px;background:#ffffff;"></div><div class="r" style="left:176.0px;top:926.5px;width:1049.5px;height:1.0px;background:#f1f1f1;"></div><div class="t" style="left:181.0px;top:933.9px;font-size:14.0px;line-height:14.0px;color:#3c8dbc;letter-spacing:-0.63px;">device 14</div><div class="t" style="left:264.0px;top:933.9px;font-size:14.0px;line-height:14.0px;color:#333333;letter-spacing:-1.09px;">House</div><div class="t" style="left:731.5px;top:933.9px;font-size:14.0px;line-height:14.0px;color:#333333;letter-spacing:-0.61px;">2022-02-12  22:05</div><div class="t" style="left:850.5px;top:933.9px;font-size:14.0px;line-height:14.0px;color:#333333;letter-spacing:-0.63px;">2022-11-22  22:05.54</div><div class="t" style="left:981.0px;top:933.9px;font-size:14.0px;line-height:14.0px;color:#333333;letter-spacing:-0.73px;">192.168.1.65</div><div class="r" style="left:1161.0px;top:933.0px;width:50.0px;height:17.5px;background:#b2b6be;border-radius:9px;"></div><div class="t" style="left:1169.2px;top:935.6px;font-size:12.4px;line-height:12.4px;color:#ffffff;font-weight:bold;letter-spacing:-0.52px;-webkit-text-stroke:0.25px #fff;">Offline</div><div class="r" style="left:259.0px;top:926.5px;width:1.0px;height:29.0px;background:#f1f1f1;"></div><div class="r" style="left:347.0px;top:926.5px;width:1.0px;height:29.0px;background:#f1f1f1;"></div><div class="r" style="left:541.0px;top:926.5px;width:1.0px;height:29.0px;background:#f1f1f1;"></div><div class="r" style="left:640.0px;top:926.5px;width:1.0px;height:29.0px;background:#f1f1f1;"></div><div class="r" style="left:726.0px;top:926.5px;width:1.0px;height:29.0px;background:#f1f1f1;"></div><div class="r" style="left:845.0px;top:926.5px;width:1.0px;height:29.0px;background:#f1f1f1;"></div><div class="r" style="left:976.0px;top:926.5px;width:1.0px;height:29.0px;background:#f1f1f1;"></div><div class="r" style="left:1074.0px;top:926.5px;width:1.0px;height:29.0px;background:#f1f1f1;"></div><div class="r" style="left:1147.0px;top:926.5px;width:1.0px;height:29.0px;background:#f1f1f1;"></div><div class="r" style="left:150.0px;top:953.0px;width:1100.0px;height:47.0px;background:#ecf0f5;"></div><div class="r" style="left:165.0px;top:953.0px;width:1070.0px;height:47.0px;background:#ffffff;"></div><div class="r" style="left:175.0px;top:953.0px;width:1049.5px;height:29.0px;background:#ffffff;"></div><div class="r" style="left:175.0px;top:953.0px;width:1049.5px;height:1.0px;background:#f1f1f1;"></div><div class="t" style="left:180.0px;top:960.4px;font-size:14.0px;line-height:14.0px;color:#3c8dbc;letter-spacing:-0.63px;">device 14</div><div class="t" style="left:263.0px;top:960.4px;font-size:14.0px;line-height:14.0px;color:#333333;letter-spacing:-1.09px;">House</div><div class="t" style="left:730.5px;top:960.4px;font-size:14.0px;line-height:14.0px;color:#333333;letter-spacing:-0.61px;">2022-02-12  22:05</div><div class="t" style="left:849.5px;top:960.4px;font-size:14.0px;line-height:14.0px;color:#333333;letter-spacing:-0.63px;">2022-11-22  22:05.54</div><div class="t" style="left:980.0px;top:960.4px;font-size:14.0px;line-height:14.0px;color:#333333;letter-spacing:-0.73px;">192.168.1.65</div><div class="r" style="left:1160.0px;top:959.5px;width:50.0px;height:17.5px;background:#b2b6be;border-radius:9px;"></div><div class="t" style="left:1168.2px;top:962.1px;font-size:12.4px;line-height:12.4px;color:#ffffff;font-weight:bold;letter-spacing:-0.52px;-webkit-text-stroke:0.25px #fff;">Offline</div><div class="r" style="left:258.0px;top:953.0px;width:1.0px;height:29.0px;background:#f1f1f1;"></div><div class="r" style="left:346.0px;top:953.0px;width:1.0px;height:29.0px;background:#f1f1f1;"></div><div class="r" style="left:540.0px;top:953.0px;width:1.0px;height:29.0px;background:#f1f1f1;"></div><div class="r" style="left:639.0px;top:953.0px;width:1.0px;height:29.0px;background:#f1f1f1;"></div><div class="r" style="left:725.0px;top:953.0px;width:1.0px;height:29.0px;background:#f1f1f1;"></div><div class="r" style="left:844.0px;top:953.0px;width:1.0px;height:29.0px;background:#f1f1f1;"></div><div class="r" style="left:975.0px;top:953.0px;width:1.0px;height:29.0px;background:#f1f1f1;"></div><div class="r" style="left:1073.0px;top:953.0px;width:1.0px;height:29.0px;background:#f1f1f1;"></div><div class="r" style="left:1146.0px;top:953.0px;width:1.0px;height:29.0px;background:#f1f1f1;"></div><div class="r" style="left:175.0px;top:982.0px;width:1049.5px;height:29.0px;background:#f9f9f9;"></div><div class="r" style="left:175.0px;top:982.0px;width:1049.5px;height:1.0px;background:#f1f1f1;"></div><div class="t" style="left:180.0px;top:989.4px;font-size:14.0px;line-height:14.0px;color:#3c8dbc;letter-spacing:-0.63px;">device 15</div><div class="t" style="left:263.0px;top:989.4px;font-size:14.0px;line-height:14.0px;color:#333333;letter-spacing:-1.09px;">House</div><div class="t" style="left:351.0px;top:989.4px;font-size:14.0px;line-height:14.0px;color:#333333;letter-spacing:-0.65px;">Switch</div><div class="t" style="left:644.0px;top:989.4px;font-size:14.0px;line-height:14.0px;color:#333333;letter-spacing:-0.67px;">Always on</div><div class="t" style="left:730.5px;top:989.4px;font-size:14.0px;line-height:14.0px;color:#333333;letter-spacing:-0.61px;">2022-02-12  22:05</div><div class="t" style="left:849.5px;top:989.4px;font-size:14.0px;line-height:14.0px;color:#333333;letter-spacing:-0.63px;">2022-5-16  22:05.48</div><div class="t" style="left:980.0px;top:989.4px;font-size:14.0px;line-height:14.0px;color:#333333;letter-spacing:-0.73px;">192.168.1.66</div><div class="r" style="left:1160.0px;top:988.5px;width:50.0px;height:17.5px;background:#00a65a;border-radius:9px;"></div><div class="t" style="left:1168.2px;top:991.1px;font-size:12.4px;line-height:12.4px;color:#ffffff;font-weight:bold;letter-spacing:-0.50px;-webkit-text-stroke:0.25px #fff;">Online</div><div class="r" style="left:258.0px;top:982.0px;width:1.0px;height:29.0px;background:#f1f1f1;"></div><div class="r" style="left:346.0px;top:982.0px;width:1.0px;height:29.0px;background:#f1f1f1;"></div><div class="r" style="left:540.0px;top:982.0px;width:1.0px;height:29.0px;background:#f1f1f1;"></div><div class="r" style="left:639.0px;top:982.0px;width:1.0px;height:29.0px;background:#f1f1f1;"></div><div class="r" style="left:725.0px;top:982.0px;width:1.0px;height:29.0px;background:#f1f1f1;"></div><div class="r" style="left:844.0px;top:982.0px;width:1.0px;height:29.0px;background:#f1f1f1;"></div><div class="r" style="left:975.0px;top:982.0px;width:1.0px;height:29.0px;background:#f1f1f1;"></div><div class="r" style="left:1073.0px;top:982.0px;width:1.0px;height:29.0px;background:#f1f1f1;"></div><div class="r" style="left:1146.0px;top:982.0px;width:1.0px;height:29.0px;background:#f1f1f1;"></div><div class="r" style="left:259.0px;top:511.0px;width:1.0px;height:38.0px;background:#f1f1f1;"></div><div class="r" style="left:347.0px;top:511.0px;width:1.0px;height:38.0px;background:#f1f1f1;"></div><div class="r" style="left:541.0px;top:511.0px;width:1.0px;height:38.0px;background:#f1f1f1;"></div><div class="r" style="left:640.0px;top:511.0px;width:1.0px;height:38.0px;background:#f1f1f1;"></div><div class="r" style="left:726.0px;top:511.0px;width:1.0px;height:38.0px;background:#f1f1f1;"></div><div class="r" style="left:845.0px;top:511.0px;width:1.0px;height:38.0px;background:#f1f1f1;"></div><div class="r" style="left:976.0px;top:511.0px;width:1.0px;height:38.0px;background:#f1f1f1;"></div><div class="r" style="left:1074.0px;top:511.0px;width:1.0px;height:38.0px;background:#f1f1f1;"></div><div class="r" style="left:1147.0px;top:511.0px;width:1.0px;height:38.0px;background:#f1f1f1;"></div></div><svg style="left:0;top:0" width="1250" height="1000"><polyline points="1251.1,50 249.3,916 184.8,975 157.1,1000" fill="none" stroke="#1b1e21" stroke-width="1.2" stroke-opacity="0.45"/></svg><div class="layer" style="height:50px"><div class="r" style="left:0.0px;top:0.0px;width:150.0px;height:50.0px;background:#367fa9;"></div><div class="r" style="left:150.0px;top:0.0px;width:1100.0px;height:50.0px;background:#3c8dbc;"></div><div class="t" style="left:0;width:150px;text-align:center;top:13px;font-size:20px;line-height:22px;color:#fff;padding-left:1px">Pi<b>.Alert</b></div><div class="r" style="left:165.0px;top:19.5px;width:12.0px;height:2.0px;background:#fff;"></div><div class="r" style="left:165.0px;top:23.8px;width:12.0px;height:2.0px;background:#fff;"></div><div class="r" style="left:165.0px;top:28.0px;width:12.0px;height:2.0px;background:#fff;"></div><div class="r" style="left:904.0px;top:16.0px;width:113.0px;height:18.7px;background:#353c42;border-radius:3px;"></div><div class="t" style="left:909.0px;top:21.0px;font-size:12.0px;line-height:12.0px;color:#d0d0d0;font-family:'Liberation Mono',monospace;letter-spacing:-0.31px;">&quot;Process: Wait&quot;</div><div class="t" style="left:1035.0px;top:10.9px;font-size:12.5px;line-height:12.5px;color:#ffffff;letter-spacing:-0.94px;-webkit-text-stroke:0.35px #fff;">Synology-NAS</div><div class="t" style="left:1035.0px;top:26.4px;font-size:12.5px;line-height:12.5px;color:#ffffff;letter-spacing:-0.75px;-webkit-text-stroke:0.35px #fff;">(27/12/2022, 12:10:23)</div><svg style="left:0;top:0" width="1250" height="50"><g transform="translate(1159.9,-4.4) scale(0.2)"><g fill="#ffffff">
<rect x="29" y="138.8" width="92" height="25.2" rx="3.5"/>
<rect x="72.3" y="102" width="5.4" height="38"/>
<circle cx="75" cy="102.6" r="5.3"/>
</g>
<g fill="#3c8dbc"><circle cx="42.4" cy="151.5" r="5.5"/><circle cx="69.5" cy="151.5" r="2.7"/><circle cx="83" cy="151.5" r="2.7"/><circle cx="96.7" cy="151.5" r="2.7"/><circle cx="110" cy="151.5" r="2.7"/></g>
<g fill="none" stroke="#ffffff" stroke-width="6.5">
<path d="M48.5 78.5 A36 36 0 0 0 48.5 126.5"/>
<path d="M56.5 86.5 A25 25 0 0 0 56.5 118.5"/>
<path d="M64 94 A14 14 0 0 0 64 111"/>
<path d="M101.5 78.5 A36 36 0 0 1 101.5 126.5"/>
<path d="M93.5 86.5 A25 25 0 0 1 93.5 118.5"/>
<path d="M86 94 A14 14 0 0 1 86 111"/>
</g>
<line x1="115" y1="104" x2="132.5" y2="121" stroke="#ffffff" stroke-width="6.2" stroke-linecap="round"/>
<circle cx="101" cy="90.5" r="18.6" fill="#ffffff"/>
<circle cx="101" cy="90.5" r="14.6" fill="#3c8dbc"/>
<path d="M98.8 78.2 A12.5 12.5 0 0 1 113.3 88.3" fill="none" stroke="#3c8dbc" stroke-width="1.8"/>
</g></svg><div class="t" style="left:1197.0px;top:17.4px;font-size:15.5px;line-height:15.5px;color:#ffffff;letter-spacing:-0.87px;-webkit-text-stroke:0.4px #fff;">Pi.Alert</div></div></body></html>
